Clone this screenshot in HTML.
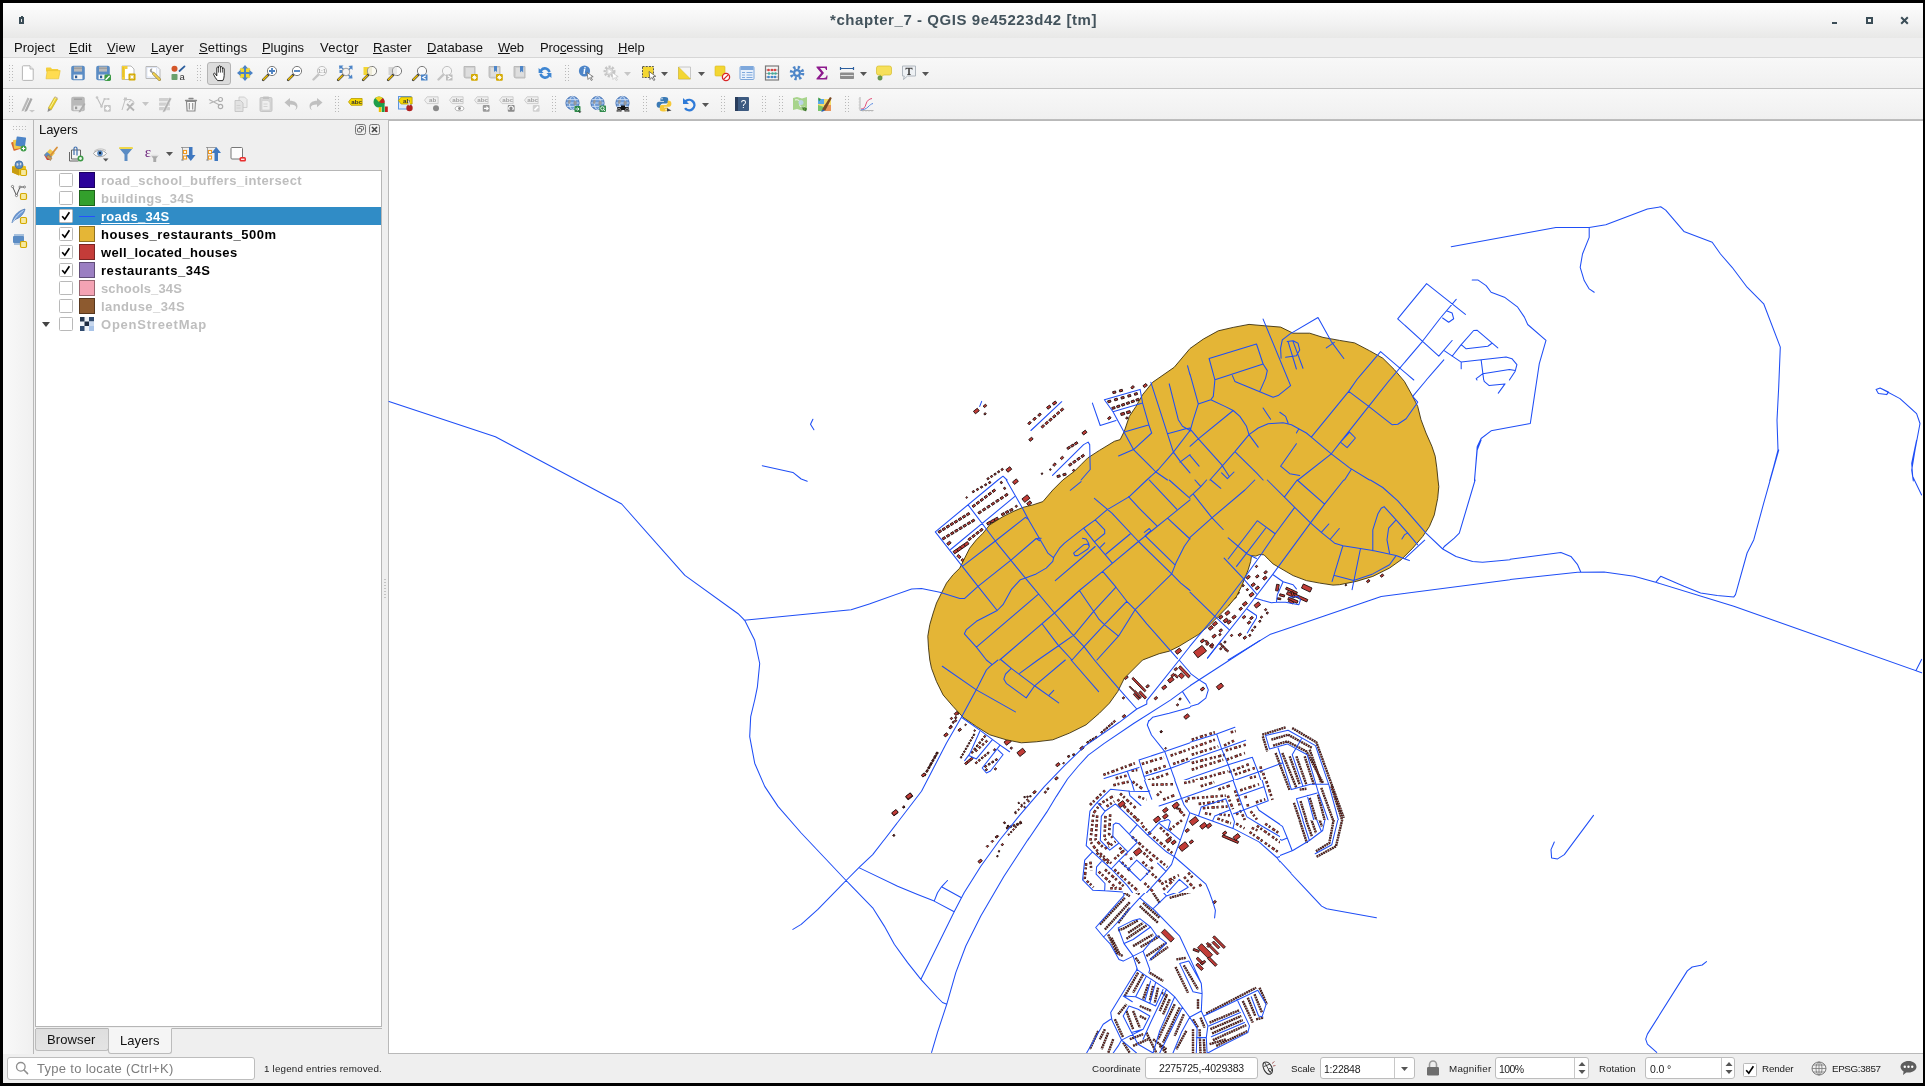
<!DOCTYPE html>
<html><head><meta charset="utf-8"><title>QGIS</title>
<style>
html,body{margin:0;padding:0}
body{width:1925px;height:1086px;background:#000;position:relative;overflow:hidden;font-family:"Liberation Sans",sans-serif}
.a{position:absolute}
.t{position:absolute;white-space:nowrap;will-change:transform}
u{text-decoration:underline;text-underline-offset:1px}
svg{position:absolute;overflow:visible;will-change:transform}
.hd{position:absolute;width:5px;height:19px;background-image:radial-gradient(circle,#b9b9b9 0.7px,transparent 0.9px);background-size:3px 3px}
</style></head><body>

<div class="a" style="left:3px;top:3px;width:1920px;height:1080px;background:#efefef"></div>
<div class="a" style="left:3px;top:3px;width:1920px;height:35px;background:linear-gradient(#fdfdfd,#f3f3f3 55%,#e8e8e7)"></div>
<span class="t" style="left:830.00px;top:11.32px;font-size:15px;line-height:17.235px;letter-spacing:0.562px;color:#43535c;font-weight:bold;">*chapter_7 - QGIS 9e45223d42 [tm]</span>
<div class="a" style="left:19px;top:17px;width:5px;height:7px;background:#3b4d57"></div><div class="a" style="left:21px;top:19px;width:1px;height:3px;background:#e8e8e8"></div><div class="a" style="left:21px;top:16px;width:2px;height:1px;background:#3b4d57"></div>
<div class="a" style="left:1832px;top:22px;width:5px;height:2px;background:#3b4d57"></div>
<div class="a" style="left:1866px;top:17px;width:3px;height:3px;border:2px solid #3b4d57"></div>
<svg style="left:1900px;top:16px" width="9" height="9" viewBox="0 0 9 9"><path d="M1.2 1.2L7.8 7.8M7.8 1.2L1.2 7.8" stroke="#3b4d57" stroke-width="2"/></svg>
<span class="t" style="left:13.70px;top:40.94px;font-size:13px;line-height:14.937px;letter-spacing:0.049px;color:#111;">Pro<u>j</u>ect</span>
<span class="t" style="left:69.40px;top:40.94px;font-size:13px;line-height:14.937px;letter-spacing:0.100px;color:#111;"><u>E</u>dit</span>
<span class="t" style="left:107.10px;top:40.94px;font-size:13px;line-height:14.937px;letter-spacing:0.090px;color:#111;"><u>V</u>iew</span>
<span class="t" style="left:150.50px;top:40.94px;font-size:13px;line-height:14.937px;letter-spacing:0.076px;color:#111;"><u>L</u>ayer</span>
<span class="t" style="left:198.50px;top:40.94px;font-size:13px;line-height:14.937px;letter-spacing:0.179px;color:#111;"><u>S</u>ettings</span>
<span class="t" style="left:262.30px;top:40.94px;font-size:13px;line-height:14.937px;letter-spacing:-0.091px;color:#111;"><u>P</u>lugins</span>
<span class="t" style="left:319.60px;top:40.94px;font-size:13px;line-height:14.937px;letter-spacing:0.324px;color:#111;">Vect<u>o</u>r</span>
<span class="t" style="left:373.30px;top:40.94px;font-size:13px;line-height:14.937px;letter-spacing:0.035px;color:#111;"><u>R</u>aster</span>
<span class="t" style="left:426.80px;top:40.94px;font-size:13px;line-height:14.937px;letter-spacing:0.056px;color:#111;"><u>D</u>atabase</span>
<span class="t" style="left:498.20px;top:40.94px;font-size:13px;line-height:14.937px;letter-spacing:-0.232px;color:#111;"><u>W</u>eb</span>
<span class="t" style="left:539.80px;top:40.94px;font-size:13px;line-height:14.937px;letter-spacing:-0.111px;color:#111;">Pro<u>c</u>essing</span>
<span class="t" style="left:618.30px;top:40.94px;font-size:13px;line-height:14.937px;letter-spacing:-0.009px;color:#111;"><u>H</u>elp</span>
<div class="a" style="left:3px;top:57px;width:1920px;height:1px;background:#d6d6d6"></div>
<div class="a" style="left:3px;top:58px;width:1920px;height:30px;background:linear-gradient(#f8f8f8,#f0f0f0)"></div>
<div class="a" style="left:3px;top:88px;width:1920px;height:1px;background:#c2c2c2"></div>
<div class="a" style="left:3px;top:89px;width:1920px;height:30px;background:linear-gradient(#f8f8f8,#f0f0f0)"></div>
<div class="a" style="left:3px;top:119px;width:1920px;height:1px;background:#bdbdbd"></div>
<div class="a" style="left:207px;top:62px;width:22px;height:21px;border:1px solid #b4b4b4;border-radius:3px;background:#dcdcdc"></div>
<svg style="left:19.8px;top:65px" width="16" height="16" viewBox="0 0 16 16"><path d="M3.200 0.800h6.800l3.200 3.200v10.600a.8.800 0 0 1-.8.800h-9.200a.8.800 0 0 1-.8-.8v-13a.8.800 0 0 1 .8-.8z" fill="#fff" stroke="#b4b4b4" stroke-width="1"/><path d="M10 .8v3.200h3.200" fill="#e9e9e9" stroke="#b4b4b4" stroke-width=".9"/></svg>
<svg style="left:44.8px;top:65px" width="16" height="16" viewBox="0 0 16 16"><path d="M1 3.200a.8.800 0 0 1 .8-.8h4l1.200 1.600h5.600a.8.800 0 0 1 .8.800v1.600h-12.400z" fill="#f4cf3c"/><path d="M2.200 5.600h13l-1.600 8.200h-12.600z" fill="#ffdc50" stroke="#e3bd2e" stroke-width=".6"/></svg>
<svg style="left:69.8px;top:65px" width="16" height="16" viewBox="0 0 16 16"><rect x="1.2" y="0.8" width="13.6" height="14.4" rx="2" fill="#5b8cc4"/><rect x="4" y="1.6" width="8" height="5" fill="#b9b9b9"/><rect x="4" y="2.6" width="8" height="1.2" fill="#9a9a9a"/><rect x="3.6" y="9.6" width="8.8" height="4.6" fill="#f4f4f4"/><rect x="5" y="10.6" width="2.2" height="2.6" fill="#2d5a94"/></svg>
<svg style="left:94.8px;top:65px" width="16" height="16" viewBox="0 0 16 16"><rect x="1.2" y="0.8" width="13.6" height="14.4" rx="2" fill="#5b8cc4"/><rect x="4" y="1.6" width="8" height="5" fill="#b9b9b9"/><rect x="4" y="2.6" width="8" height="1.2" fill="#9a9a9a"/><rect x="3.6" y="9.6" width="8.8" height="4.6" fill="#f4f4f4"/><rect x="5" y="10.6" width="2.2" height="2.6" fill="#2d5a94"/><rect x="9.400" y="9.400" width="6.600" height="6.600" rx="1.400" fill="#3c9a45"/><path d="M11 14.400l3.200-3.200" stroke="#fff" stroke-width="1.400" stroke-linecap="round"/></svg>
<svg style="left:119.8px;top:65px" width="16" height="16" viewBox="0 0 16 16"><path d="M2 1h9l3 3v10.500h-12z" fill="#fff" stroke="#b8b8b8"/><path d="M2 1h5.500v3h-2.500v10.500h-3z" fill="#f3cf3a"/><path d="M2.500 3h1.200M2.500 5h1.200M2.500 7h1.200M2.500 9h1.200M2.500 11h1.200" stroke="#c39c00" stroke-width=".7"/><rect x="8.500" y="8.500" width="7" height="7" rx="1" fill="#d4a900"/><path d="M12 9.800v4.400M9.800 12h4.400M10.500 10.500l3 3M13.500 10.500l-3 3" stroke="#fff" stroke-width="1"/></svg>
<svg style="left:144.8px;top:65px" width="16" height="16" viewBox="0 0 16 16"><path d="M1 1.500h11l3 3v9h-14z" fill="#f4f7ff" stroke="#b8b8b8"/><path d="M2 2.500h9.500v9.500h-9.500z" fill="#fff" stroke="#cfd9ee" stroke-width=".6"/><path d="M8.500 8.500l6 6" stroke="#8a7a3a" stroke-width="3" stroke-linecap="round"/><path d="M8.500 8.500l6 6" stroke="#f0cf50" stroke-width="1.800" stroke-linecap="round"/><path d="M5.200 4.200a2.200 2.200 0 1 0 3.600 2.600l-1.600-.4-.6-1.400 1-1.200a2.200 2.200 0 0 0-2.400.4z" fill="#9a9a9a"/></svg>
<svg style="left:169.8px;top:65px" width="16" height="16" viewBox="0 0 16 16"><circle cx="4.500" cy="3.800" r="3" fill="#d4572a"/><rect x="1.500" y="9" width="6" height="6" rx=".8" fill="#6aa06c"/><path d="M9.500 6l5-4.600" stroke="#2d5f9e" stroke-width="1.800" stroke-linecap="round"/><text x="12.200" y="15" font-family="Liberation Sans, sans-serif" font-size="9.500" text-anchor="middle" fill="#333">a</text></svg>
<svg style="left:211.8px;top:65px" width="16" height="16" viewBox="0 0 16 16"><path d="M5.600 15.600c-1.500-1.700-3.200-4.200-4-6.200-.4-1.100 1-1.700 1.700-.7l1.500 2.200v-7.900c0-1.300 1.800-1.300 1.800 0v-1.300c0-1.300 1.900-1.300 1.900 0v.9c0-1.300 1.900-1.300 1.900 0v1.300c0-1.200 1.800-1.200 1.800 0v6.500c0 2.200-.6 3.500-1.300 5.200z" fill="#fff" stroke="#1a1a1a" stroke-width=".95" stroke-linejoin="round"/><path d="M6.600 3v4.600M8.500 2.600v5M10.400 3.900v3.700" stroke="#1a1a1a" stroke-width=".75"/></svg>
<svg style="left:236.8px;top:65px" width="16" height="16" viewBox="0 0 16 16"><rect x="3.200" y="3.200" width="9.600" height="9.600" rx="1" fill="#f2d830" stroke="#d9bd1e" stroke-width=".5"/><path d="M8 0l3 3.600h-6zM8 16l3-3.600h-6zM0 8l3.600-3v6zM16 8l-3.600-3v6z" fill="#4a82c6"/><path d="M8 3v10M3 8h10" stroke="#4a82c6" stroke-width="2"/></svg>
<svg style="left:261.8px;top:65px" width="16" height="16" viewBox="0 0 16 16"><path d="M1.2 14.8L6.2 9.8" stroke="#3a3a3a" stroke-width="2.6" stroke-linecap="round"/><path d="M1.5 14.5L5.2 10.8" stroke="#f0c000" stroke-width="1.5" stroke-linecap="round"/><circle cx="10" cy="6" r="4.6" fill="#fff" stroke="#7a7a7a" stroke-width="1"/><path d="M7 6h6M10 3v6" stroke="#4a7fc0" stroke-width="1.800"/></svg>
<svg style="left:286.8px;top:65px" width="16" height="16" viewBox="0 0 16 16"><path d="M1.2 14.8L6.2 9.8" stroke="#3a3a3a" stroke-width="2.6" stroke-linecap="round"/><path d="M1.5 14.5L5.2 10.8" stroke="#f0c000" stroke-width="1.5" stroke-linecap="round"/><circle cx="10" cy="6" r="4.6" fill="#fff" stroke="#7a7a7a" stroke-width="1"/><path d="M7 6h6" stroke="#4a7fc0" stroke-width="1.800"/></svg>
<svg style="left:311.8px;top:65px" width="16" height="16" viewBox="0 0 16 16"><path d="M1.5 14.5L6.2 9.8" stroke="#c4c4c4" stroke-width="2.4" stroke-linecap="round"/><circle cx="10" cy="6" r="4.6" fill="#f6f6f6" stroke="#c0c0c0" stroke-width="1"/><text x="10" y="8" font-family="Liberation Sans, sans-serif" font-size="5.500" font-weight="bold" text-anchor="middle" fill="#a8a8a8">1:1</text></svg>
<svg style="left:336.8px;top:65px" width="16" height="16" viewBox="0 0 16 16"><path d="M2 .5h4.500l-1.500 1.500 2 2-1 1-2-2-1.500 1.500zM15.500.5v4.500l-1.500-1.500-2 2-1-1 2-2-1.500-1.500zM15.500 13.500h-4.500l1.500-1.500-2-2 1-1 2 2 1.500-1.500zM2.500 5h3v3h-3z" fill="#4d85c8"/><path d="M1.2 14.8L6.2 9.8" stroke="#3a3a3a" stroke-width="2.6" stroke-linecap="round"/><path d="M1.5 14.5L5.2 10.8" stroke="#f0c000" stroke-width="1.5" stroke-linecap="round"/><circle cx="9" cy="7" r="3.800" fill="#f2f2f2" fill-opacity=".85" stroke="#8a8a8a" stroke-width=".8"/></svg>
<svg style="left:361.8px;top:65px" width="16" height="16" viewBox="0 0 16 16"><rect x="1.500" y="2" width="7" height="8" fill="#f3d632"/><path d="M1.2 14.8L6.2 9.8" stroke="#3a3a3a" stroke-width="2.6" stroke-linecap="round"/><path d="M1.5 14.5L5.2 10.8" stroke="#f0c000" stroke-width="1.5" stroke-linecap="round"/><circle cx="10" cy="6" r="4.6" fill="#fbfaf2" stroke="#7a7a7a" stroke-width="1"/><path d="M10 1.500a4.500 4.500 0 0 0 0 9z" fill="#e8e4cc" opacity=".7"/></svg>
<svg style="left:386.8px;top:65px" width="16" height="16" viewBox="0 0 16 16"><rect x="1.500" y="2" width="7" height="8" fill="#d4d4d4"/><path d="M1.2 14.8L6.2 9.8" stroke="#3a3a3a" stroke-width="2.6" stroke-linecap="round"/><path d="M1.5 14.5L5.2 10.8" stroke="#f0c000" stroke-width="1.5" stroke-linecap="round"/><circle cx="10" cy="6" r="4.6" fill="#fafafa" stroke="#7a7a7a" stroke-width="1"/><path d="M10 1.500a4.500 4.500 0 0 0 0 9z" fill="#e2e2e2" opacity=".7"/></svg>
<svg style="left:411.8px;top:65px" width="16" height="16" viewBox="0 0 16 16"><path d="M1.2 14.8L6.2 9.8" stroke="#3a3a3a" stroke-width="2.6" stroke-linecap="round"/><path d="M1.5 14.5L5.2 10.8" stroke="#f0c000" stroke-width="1.5" stroke-linecap="round"/><circle cx="10" cy="6" r="4.6" fill="#fafafa" stroke="#7a7a7a" stroke-width="1"/><rect x="9" y="9.500" width="6.500" height="6" fill="#4d85c8"/><path d="M13.800 10.800l-3 1.700 3 1.700" stroke="#fff" stroke-width="1.200" fill="none"/></svg>
<svg style="left:436.8px;top:65px" width="16" height="16" viewBox="0 0 16 16"><path d="M1.5 14.5L6.2 9.8" stroke="#c4c4c4" stroke-width="2.4" stroke-linecap="round"/><circle cx="10" cy="6" r="4.6" fill="#f6f6f6" stroke="#c0c0c0" stroke-width="1"/><rect x="9" y="9.500" width="6.500" height="6" fill="#bdbdbd"/><path d="M10.800 10.800l3 1.700-3 1.700" stroke="#fff" stroke-width="1.200" fill="none"/></svg>
<svg style="left:461.8px;top:65px" width="16" height="16" viewBox="0 0 16 16"><path d="M2 1.500h11v11.500h-9a2 2 0 0 1-2-2z" fill="#cfcfcf" stroke="#b0b0b0" stroke-width=".8"/><path d="M4 3h8v8.500h-8z" fill="#dedede"/><rect x="9" y="9" width="6.800" height="6.800" rx="1" fill="#d4a900"/><path d="M12.400 10.200v4.400M10.200 12.400h4.400M10.900 10.900l3 3M13.900 10.900l-3 3" stroke="#fff" stroke-width="1"/></svg>
<svg style="left:486.8px;top:65px" width="16" height="16" viewBox="0 0 16 16"><path d="M2 1.500h11v11.500h-9a2 2 0 0 1-2-2z" fill="#cfcfcf" stroke="#b0b0b0" stroke-width=".8"/><path d="M4 3h8v8.500h-8z" fill="#dedede"/><path d="M7 1v6l1.500-1.300 1.500 1.300v-6z" fill="#4d85c8"/><rect x="9" y="9" width="6.800" height="6.800" rx="1" fill="#d4a900"/><path d="M12.400 10.200v4.400M10.200 12.400h4.400M10.900 10.900l3 3M13.900 10.900l-3 3" stroke="#fff" stroke-width="1"/></svg>
<svg style="left:511.8px;top:65px" width="16" height="16" viewBox="0 0 16 16"><path d="M2 1.500h11v11.500h-9a2 2 0 0 1-2-2z" fill="#cfcfcf" stroke="#b0b0b0" stroke-width=".8"/><path d="M4 3h8v8.500h-8z" fill="#dedede"/><path d="M8 1v6.500l1.600-1.400 1.600 1.400v-6.500z" fill="#4d85c8"/></svg>
<svg style="left:536.8px;top:65px" width="16" height="16" viewBox="0 0 16 16"><path d="M13.600 7a5.800 5.800 0 0 0-10.400-2.600l-1.600-1.400v5h5l-1.700-1.800a3.500 3.500 0 0 1 6.300 1.400z" fill="#3f86d2"/><path d="M2.400 9a5.800 5.800 0 0 0 10.400 2.600l1.600 1.400v-5h-5l1.700 1.800a3.500 3.500 0 0 1-6.300-1.400z" fill="#3f86d2"/></svg>
<svg style="left:577.8px;top:65px" width="16" height="16" viewBox="0 0 16 16"><circle cx="6.500" cy="6" r="5.600" fill="#4d85c8"/><text x="6.500" y="9.400" font-family="Liberation Serif, serif" font-size="10" font-weight="bold" font-style="italic" text-anchor="middle" fill="#fff">i</text><path d="M9 7.500l1 7 1.700-1.800 1.600 2.800 1.100-.6-1.600-2.800 2.400-.4z" fill="#fff" stroke="#555" stroke-width=".7" stroke-linejoin="round"/></svg>
<svg style="left:602.8px;top:65px" width="16" height="16" viewBox="0 0 16 16"><circle cx="6.500" cy="6.500" r="4.800" fill="none" stroke="#c6c6c6" stroke-width="2.400" stroke-dasharray="2.200 1.300"/><circle cx="6.500" cy="6.500" r="3.600" fill="#dcdcdc" stroke="#c0c0c0" stroke-width=".8"/><path d="M5.400 4.500v4l3-2z" fill="#fff"/><path d="M9 7.500l1 7 1.700-1.800 1.600 2.800 1.100-.6-1.600-2.800 2.400-.4z" fill="#fff" stroke="#c2c2c2" stroke-width=".7"/></svg>
<svg style="left:640.8px;top:65px" width="16" height="16" viewBox="0 0 16 16"><rect x="1.500" y="1.500" width="11" height="11" fill="#f3d632" stroke="#555" stroke-width="1" stroke-dasharray="2 1.200"/><path d="M8 6.500l1 8 1.900-2 1.800 3 1.200-.7-1.800-3 2.700-.5z" fill="#fff" stroke="#444" stroke-width=".7" stroke-linejoin="round"/></svg>
<svg style="left:676.8px;top:65px" width="16" height="16" viewBox="0 0 16 16"><path d="M1.500 2h12v12h-12z" fill="#f4f4f4" stroke="#bdbdbd" stroke-width=".8"/><path d="M1.500 2l12 12h-12z" fill="#f3d632" stroke="#d0b420" stroke-width=".5"/></svg>
<svg style="left:713.8px;top:65px" width="16" height="16" viewBox="0 0 16 16"><rect x="1" y="1" width="10" height="10" rx="1" fill="#f3d632" stroke="#d6ba24" stroke-width=".6"/><circle cx="12" cy="12" r="3.600" fill="#fff" stroke="#d82424" stroke-width="1.300"/><path d="M9.600 14.400l4.800-4.800" stroke="#d82424" stroke-width="1.300"/></svg>
<svg style="left:738.8px;top:65px" width="16" height="16" viewBox="0 0 16 16"><rect x="1" y="1.500" width="14" height="13" rx="1" fill="#e8f0fb" stroke="#7ea8dc" stroke-width="1"/><rect x="1.500" y="2" width="13" height="3" fill="#7ea8dc"/><path d="M3 7.500h3M7.500 7.500h6M3 10h3M7.500 10h6M3 12.500h3M7.500 12.500h6" stroke="#7ea8dc" stroke-width="1.100"/></svg>
<svg style="left:763.8px;top:65px" width="16" height="16" viewBox="0 0 16 16"><rect x="1.500" y="1" width="13" height="14" fill="#f4f4f4" stroke="#7a7a7a" stroke-width="1.200"/><path d="M2 5h12M2 8.500h12M2 12h12" stroke="#8a8a8a" stroke-width=".7"/><circle cx="4.500" cy="5" r="1.300" fill="#d44"/><circle cx="8" cy="5" r="1.300" fill="#d44"/><circle cx="11" cy="5" r="1.300" fill="#d44"/><circle cx="5" cy="8.500" r="1.300" fill="#4a9"/><circle cx="8.500" cy="8.500" r="1.300" fill="#4a9"/><circle cx="11.500" cy="8.500" r="1.300" fill="#4a9"/><circle cx="4.500" cy="12" r="1.300" fill="#48c"/><circle cx="8" cy="12" r="1.300" fill="#48c"/><circle cx="11" cy="12" r="1.300" fill="#48c"/></svg>
<svg style="left:788.8px;top:65px" width="16" height="16" viewBox="0 0 16 16"><circle cx="8" cy="8" r="5.600" fill="none" stroke="#4d85c8" stroke-width="3.400" stroke-dasharray="2.200 2.200"/><circle cx="8" cy="8" r="4" fill="#4d85c8"/><circle cx="8" cy="8" r="1.800" fill="#f4f4f4"/></svg>
<svg style="left:813.8px;top:65px" width="16" height="16" viewBox="0 0 16 16"><path d="M2.500 1.500h10.500v3.500h-1c-.2-1.500-.8-2-2.500-2h-3.500l4 5-4.200 5h4c1.800 0 2.400-.7 2.800-2.500h1l-.5 4h-10.600v-1l4.600-5.500-4.600-5.500z" fill="#8e1a8e"/></svg>
<svg style="left:838.8px;top:65px" width="16" height="16" viewBox="0 0 16 16"><path d="M1 3.500h14M1.500 2v3M14.500 2v3" stroke="#2d5f9e" stroke-width="1.200"/><rect x="1" y="7.500" width="14" height="6.500" rx=".8" fill="#8c8c8c"/><path d="M1.500 10.500h13" stroke="#e0e0e0" stroke-width="1"/></svg>
<svg style="left:875.8px;top:65px" width="16" height="16" viewBox="0 0 16 16"><path d="M2.500 1h11a2 2 0 0 1 2 2v5a2 2 0 0 1-2 2h-6l-3.500 3.500.5-3.500h-2a2 2 0 0 1-2-2v-5a2 2 0 0 1 2-2z" fill="#f6e05a" stroke="#d6bc2e" stroke-width=".7"/><circle cx="4" cy="13" r="2.200" fill="#6a9a50" stroke="#4a7a35" stroke-width=".5"/></svg>
<svg style="left:900.8px;top:65px" width="16" height="16" viewBox="0 0 16 16"><path d="M1.500 1h13v10h-8l-4 3.500.8-3.500h-1.800z" fill="#eef1f4" stroke="#a8b0b8" stroke-width=".9"/><path d="M4.500 2.800h7v2h-.6c-.1-.8-.4-1-1.200-1h-.9v4.800c0 .5.200.7 1 .7v.6h-3.600v-.6c.8 0 1-.2 1-.7v-4.800h-.9c-.8 0-1.100.2-1.200 1h-.6z" fill="#444"/></svg>
<div class="hd" style="left:8px;top:64px"></div>
<div class="hd" style="left:196px;top:64px"></div>
<div class="hd" style="left:564px;top:64px"></div>
<svg style="left:623.5px;top:72px" width="7" height="4" viewBox="0 0 7 4"><path d="M0 0h7L3.500 4z" fill="#c6c6c6"/></svg>
<svg style="left:660.5px;top:72px" width="7" height="4" viewBox="0 0 7 4"><path d="M0 0h7L3.5 4z" fill="#555"/></svg>
<svg style="left:697.5px;top:72px" width="7" height="4" viewBox="0 0 7 4"><path d="M0 0h7L3.5 4z" fill="#555"/></svg>
<svg style="left:859.5px;top:72px" width="7" height="4" viewBox="0 0 7 4"><path d="M0 0h7L3.5 4z" fill="#555"/></svg>
<svg style="left:921.5px;top:72px" width="7" height="4" viewBox="0 0 7 4"><path d="M0 0h7L3.5 4z" fill="#555"/></svg>
<svg style="left:19.8px;top:96px" width="16" height="16" viewBox="0 0 16 16"><path d="M2 13.500l5.500-12 2 1-5.500 12-2.500 1z" fill="#b8b8b8"/><path d="M5 14l5.500-12 2 1-5.500 12-2.500 1z" fill="#a9a9a9"/><path d="M9 14h6l-3 2.600z" fill="#c9c9c9"/></svg>
<svg style="left:44.8px;top:96px" width="16" height="16" viewBox="0 0 16 16"><path d="M3.200 12.200l6.300-11 3 1.700-6.300 11z" fill="#e8cf2c" stroke="#b89c10" stroke-width=".5"/><path d="M5 11.800l5.600-9.800" stroke="#fff6a8" stroke-width=".9"/><path d="M3.200 12.200l3 1.700-3.700 2z" fill="#8d8d8d"/><path d="M9.500 1.200l.6-1 3 1.700-.6 1z" fill="#c9b9a0"/></svg>
<svg style="left:69.8px;top:96px" width="16" height="16" viewBox="0 0 16 16"><rect x="1.2" y="0.8" width="13.6" height="14.4" rx="2" fill="#b9b9b9"/><rect x="4" y="1.6" width="8" height="5" fill="#b9b9b9"/><rect x="4" y="2.6" width="8" height="1.2" fill="#9a9a9a"/><rect x="3.6" y="9.6" width="8.8" height="4.6" fill="#e6e6e6"/><rect x="5" y="10.6" width="2.2" height="2.6" fill="#9a9a9a"/><path d="M9 15l5-8 1.500 1-5 8-2 .6z" fill="#adadad"/></svg>
<svg style="left:94.8px;top:96px" width="16" height="16" viewBox="0 0 16 16"><path d="M2 1.500l4.500 9 3-7.500h4" fill="none" stroke="#bdbdbd" stroke-width="1.100"/><circle cx="2" cy="1.500" r="1.300" fill="#c6c6c6"/><circle cx="6.500" cy="10.500" r="1.300" fill="#c6c6c6"/><circle cx="9.500" cy="3" r="1.100" fill="#c6c6c6"/><circle cx="13.500" cy="3" r="1.100" fill="#c6c6c6"/><rect x="9" y="9" width="6.800" height="6.800" rx="1" fill="#c6c6c6"/><path d="M12.400 10.200v4.400M10.200 12.400h4.400M10.900 10.900l3 3M13.900 10.900l-3 3" stroke="#fff" stroke-width="1"/></svg>
<svg style="left:119.8px;top:96px" width="16" height="16" viewBox="0 0 16 16"><path d="M2 14l3.500-11.500M3.500 3.500h8" stroke="#c0c0c0" stroke-width="1"/><rect x="4" y="1.500" width="3" height="3" fill="#c6c6c6"/><path d="M7 8l7 6.500M13 7l-6 7.500" stroke="#b4b4b4" stroke-width="1.800"/><path d="M9 6.500a2.500 2.500 0 1 1 3 3" stroke="#c0c0c0" fill="none"/></svg>
<svg style="left:157.8px;top:96px" width="16" height="16" viewBox="0 0 16 16"><rect x="1" y="2" width="11" height="3.300" rx=".6" fill="#d0d0d0"/><rect x="1" y="6.500" width="11" height="3.300" rx=".6" fill="#d0d0d0"/><rect x="1" y="11" width="11" height="3.300" rx=".6" fill="#d0d0d0"/><path d="M5 14.500l6.500-13 2.200 1.100-6.500 13-2.600.9z" fill="#b2b2b2" stroke="#f4f4f4" stroke-width=".4"/></svg>
<svg style="left:182.8px;top:96px" width="16" height="16" viewBox="0 0 16 16"><path d="M2.500 4.500h11M6 2.500h4" stroke="#8a8a8a" stroke-width="1.300" stroke-linecap="round"/><path d="M3.500 5.500h9l-.6 9.500h-7.800z" fill="#fafafa" stroke="#8a8a8a" stroke-width="1.200"/><path d="M6.300 7v6.500M9.700 7v6.500" stroke="#8a8a8a" stroke-width="1.100"/></svg>
<svg style="left:207.8px;top:96px" width="16" height="16" viewBox="0 0 16 16"><path d="M1 3.500l10.500 5.500M1.500 7.500l9.500-4" stroke="#b4b4b4" stroke-width="1.100"/><circle cx="12.500" cy="3.500" r="2" fill="none" stroke="#adadad" stroke-width="1.200"/><circle cx="12.500" cy="10.500" r="2.200" fill="none" stroke="#adadad" stroke-width="1.200"/></svg>
<svg style="left:232.8px;top:96px" width="16" height="16" viewBox="0 0 16 16"><path d="M6 1h5.500l2.500 2.500v8h-8z" fill="#ececec" stroke="#cdcdcd" stroke-width=".9"/><path d="M2 4.500h5.500l2.500 2.500v8.500h-8z" fill="#e2e2e2" stroke="#c4c4c4" stroke-width=".9"/><path d="M3.500 9.500h4M3.500 12h4" stroke="#cfcfcf" stroke-width=".9"/></svg>
<svg style="left:257.8px;top:96px" width="16" height="16" viewBox="0 0 16 16"><rect x="2" y="1.500" width="12" height="14" rx="1.200" fill="#d6d6d6" stroke="#c2c2c2" stroke-width=".9"/><rect x="5" y=".5" width="6" height="2.500" rx=".6" fill="#c2c2c2"/><path d="M4 4.500h6l2 2v7.500h-8z" fill="#efefef" stroke="#cacaca" stroke-width=".6"/><path d="M5.500 8h4M5.500 10.500h4" stroke="#cfcfcf" stroke-width=".9"/></svg>
<svg style="left:282.8px;top:96px" width="16" height="16" viewBox="0 0 16 16"><path d="M1.500 6.500l5.500-4.500v2.800c4.500 0 7.500 2.200 7.500 5.400 0 1.800-1 3.200-2.600 4 .9-.9 1.300-1.800 1.300-2.700 0-1.900-2.400-2.900-6.200-2.900v2.700z" fill="#c0c0c0"/></svg>
<svg style="left:307.8px;top:96px" width="16" height="16" viewBox="0 0 16 16"><path d="M14.500 6.500l-5.500-4.500v2.800c-4.500 0-7.500 2.200-7.500 5.400 0 1.800 1 3.200 2.600 4-.9-.9-1.300-1.800-1.300-2.700 0-1.900 2.400-2.900 6.200-2.900v2.700z" fill="#c0c0c0"/></svg>
<svg style="left:347.8px;top:96px" width="16" height="16" viewBox="0 0 16 16"><path d="M0.5 5.9 l2.6 -3.4 h11 v6.8 h-11 z" fill="#f5d800" stroke="#b89a00" stroke-width="0.8"/><text x="8.6" y="8.1" font-family="Liberation Sans, sans-serif" font-size="6.2" font-weight="bold" text-anchor="middle" fill="#333">abc</text></svg>
<svg style="left:372.8px;top:96px" width="16" height="16" viewBox="0 0 16 16"><circle cx="6" cy="6" r="5.500" fill="#1e9e4a"/><path d="M6 6l-3.900-3.900a5.500 5.500 0 0 1 7.800 0z" fill="#f0d020"/><path d="M6 6l3.900-3.900a5.500 5.500 0 0 1 1 6.400z" fill="#c8201e"/><rect x="5.800" y="11" width="2.600" height="5" fill="#f0c000"/><rect x="8.800" y="7" width="2.800" height="9" fill="#1e9e4a"/><rect x="12" y="10.500" width="2.800" height="5.500" fill="#c8201e"/></svg>
<svg style="left:397.8px;top:96px" width="16" height="16" viewBox="0 0 16 16"><rect x=".5" y=".5" width="12.500" height="12.500" fill="#dbe8fa" stroke="#5b95e0" stroke-width="1"/><path d="M0.5 4.6 l2.6 -3.4 h11 v6.8 h-11 z" fill="#f5d800" stroke="#b89a00" stroke-width="0.8"/><text x="8.6" y="6.8" font-family="Liberation Sans, sans-serif" font-size="6.2" font-weight="bold" text-anchor="middle" fill="#333">ab</text><circle cx="11.500" cy="12" r="3.200" fill="#b02222"/><path d="M10.500 4.500l1 5" stroke="#ddd" stroke-width="1.400"/></svg>
<svg style="left:423.8px;top:96px" width="16" height="16" viewBox="0 0 16 16"><path d="M0.5 4.2 l2.6 -3.4 h11 v6.8 h-11 z" fill="#f0f0f0" stroke="#c4c4c4" stroke-width="0.8"/><text x="8.6" y="6.4" font-family="Liberation Sans, sans-serif" font-size="6.2" font-weight="bold" text-anchor="middle" fill="#a2a2a2">ab</text><circle cx="12" cy="12.200" r="3" fill="#8a8a8a"/></svg>
<svg style="left:448.8px;top:96px" width="16" height="16" viewBox="0 0 16 16"><path d="M0.5 4.2 l2.6 -3.4 h11 v6.8 h-11 z" fill="#f0f0f0" stroke="#c4c4c4" stroke-width="0.8"/><text x="8.6" y="6.4" font-family="Liberation Sans, sans-serif" font-size="6.2" font-weight="bold" text-anchor="middle" fill="#a2a2a2">abc</text><ellipse cx="10.500" cy="12.500" rx="4.300" ry="2.300" fill="#fff" stroke="#9a9a9a" stroke-width=".8"/><circle cx="10.500" cy="12.500" r="1.400" fill="#8a8a8a"/></svg>
<svg style="left:473.8px;top:96px" width="16" height="16" viewBox="0 0 16 16"><path d="M0.5 4.2 l2.6 -3.4 h11 v6.8 h-11 z" fill="#f0f0f0" stroke="#c4c4c4" stroke-width="0.8"/><text x="8.6" y="6.4" font-family="Liberation Sans, sans-serif" font-size="6.2" font-weight="bold" text-anchor="middle" fill="#a2a2a2">abc</text><rect x="8.800" y="9" width="6.800" height="6.800" rx="1" fill="#9a9a9a"/><path d="M10 12.400h4M12.400 10.600l1.800 1.800-1.800 1.800" stroke="#fff" stroke-width="1.200" fill="none"/></svg>
<svg style="left:498.8px;top:96px" width="16" height="16" viewBox="0 0 16 16"><path d="M0.5 4.2 l2.6 -3.4 h11 v6.8 h-11 z" fill="#f0f0f0" stroke="#c4c4c4" stroke-width="0.8"/><text x="8.6" y="6.4" font-family="Liberation Sans, sans-serif" font-size="6.2" font-weight="bold" text-anchor="middle" fill="#a2a2a2">abc</text><rect x="8.800" y="9" width="6.800" height="6.800" rx="1" fill="#8a8a8a"/><path d="M10.400 13.800a2.200 2.200 0 1 1 3.200 0" stroke="#fff" stroke-width="1.100" fill="none"/></svg>
<svg style="left:523.8px;top:96px" width="16" height="16" viewBox="0 0 16 16"><path d="M0.5 4.2 l2.6 -3.4 h11 v6.8 h-11 z" fill="#f0f0f0" stroke="#c4c4c4" stroke-width="0.8"/><text x="8.6" y="6.4" font-family="Liberation Sans, sans-serif" font-size="6.2" font-weight="bold" text-anchor="middle" fill="#a2a2a2">abc</text><rect x="8.800" y="9" width="6.800" height="6.800" rx="1" fill="#d0d0d0"/><path d="M10.500 14.200l3.600-3.600" stroke="#fff" stroke-width="1.800"/></svg>
<svg style="left:564.8px;top:96px" width="16" height="16" viewBox="0 0 16 16"><circle cx="7.5" cy="7" r="6.6" fill="#6f9bd6" stroke="#2f5fa8" stroke-width="0.8"/><ellipse cx="7.5" cy="7" rx="3" ry="6.6" fill="none" stroke="#d8e6f7" stroke-width="0.9"/><path d="M1 7h13M2 3.6h11M2 10.4h11" stroke="#d8e6f7" stroke-width="0.8"/><path d="M3.4 4.5c1-.8 2-1 2.2 0s-.2 2.400-1 3.200-1.800-.2-1.600-1.600z M9 5c1.200-.6 2.600 0 2.800 1.200s-.6 3-1.600 3.200-1.600-1.200-1.800-2.200z" fill="#8f8f8f" opacity=".85"/><rect x="9.500" y="10" width="6" height="6" rx=".8" fill="#2f8a4a"/><path d="M10.500 13h3.500l-1.500-1.500M14 13l-1.500 1.500" stroke="#fff" stroke-width=".9" fill="none"/><path d="M13 15.500h3.500l-1.700 1.500z" fill="#333"/></svg>
<svg style="left:589.8px;top:96px" width="16" height="16" viewBox="0 0 16 16"><circle cx="7.5" cy="7" r="6.6" fill="#6f9bd6" stroke="#2f5fa8" stroke-width="0.8"/><ellipse cx="7.5" cy="7" rx="3" ry="6.6" fill="none" stroke="#d8e6f7" stroke-width="0.9"/><path d="M1 7h13M2 3.6h11M2 10.4h11" stroke="#d8e6f7" stroke-width="0.8"/><path d="M3.4 4.5c1-.8 2-1 2.2 0s-.2 2.400-1 3.200-1.800-.2-1.600-1.600z M9 5c1.200-.6 2.600 0 2.800 1.200s-.6 3-1.600 3.200-1.600-1.200-1.800-2.200z" fill="#8f8f8f" opacity=".85"/><rect x="9.500" y="9.500" width="6.500" height="6.500" rx=".8" fill="#2f8a4a"/><circle cx="12.400" cy="12.400" r="1.700" fill="none" stroke="#fff" stroke-width=".9"/><path d="M13.600 13.600l1.600 1.600" stroke="#fff" stroke-width=".9"/></svg>
<svg style="left:614.8px;top:96px" width="16" height="16" viewBox="0 0 16 16"><circle cx="7.5" cy="7" r="6.6" fill="#6f9bd6" stroke="#2f5fa8" stroke-width="0.8"/><ellipse cx="7.5" cy="7" rx="3" ry="6.6" fill="none" stroke="#d8e6f7" stroke-width="0.9"/><path d="M1 7h13M2 3.6h11M2 10.4h11" stroke="#d8e6f7" stroke-width="0.8"/><path d="M3.4 4.5c1-.8 2-1 2.2 0s-.2 2.400-1 3.200-1.800-.2-1.600-1.600z M9 5c1.200-.6 2.600 0 2.800 1.200s-.6 3-1.600 3.200-1.600-1.200-1.800-2.200z" fill="#8f8f8f" opacity=".85"/><path d="M2.500 11h3.500v-1.500h4v1.500h3.500l1 4.500h-5v-1.500h-3v1.500h-5z" fill="#111"/><circle cx="4" cy="13.700" r="1.500" fill="#333" stroke="#eee" stroke-width=".5"/><circle cx="12" cy="13.700" r="1.500" fill="#333" stroke="#eee" stroke-width=".5"/></svg>
<svg style="left:655.8px;top:96px" width="16" height="16" viewBox="0 0 16 16"><path d="M7.800 1c-2.400 0-3.400.8-3.400 2.200v1.800h3.600v.8h-5c-1.500 0-2.400 1.200-2.400 3s.9 3 2.400 3h1.400v-2c0-1.400 1-2.400 2.400-2.400h3.400c1.200 0 2-.9 2-2v-2.200c0-1.400-1.200-2.200-3.200-2.200z" fill="#3b7ab5"/><circle cx="6" cy="2.800" r=".7" fill="#fff"/><path d="M8.200 15.500c2.400 0 3.400-.8 3.400-2.200v-1.800h-3.600v-.8h5c1.500 0 2.400-1.200 2.400-3s-.9-3-2.400-3h-1.400v2c0 1.400-1 2.400-2.400 2.400h-3.400c-1.200 0-2 .9-2 2v2.200c0 1.400 1.200 2.200 3.200 2.200z" fill="#f6c93a"/><circle cx="10" cy="13.700" r=".7" fill="#fff"/><path d="M11 12l4.500 2.500-4.500 1z" fill="#444"/></svg>
<svg style="left:680.8px;top:96px" width="16" height="16" viewBox="0 0 16 16"><path d="M2 2v6h6l-2.200-2.200a4 4 0 1 1-.8 5.700l-2 1.300a6.400 6.400 0 1 0 1.100-8.700z" fill="#2f7bd8"/></svg>
<svg style="left:733.8px;top:96px" width="16" height="16" viewBox="0 0 16 16"><rect x="1" y="1" width="14" height="14" rx="1" fill="#3d5a80"/><rect x="1" y="1" width="3" height="14" fill="#293d5c"/><text x="9.500" y="12" font-family="Liberation Sans, sans-serif" font-size="10" text-anchor="middle" fill="#fff">?</text></svg>
<svg style="left:791.8px;top:96px" width="16" height="16" viewBox="0 0 16 16"><path d="M1 2l4-1 5 1.500 5-1.500v12l-5 1.500-5-1.500-4 1z" fill="#a8d48c"/><path d="M3 4c3-1 6 1 5 4s2 4 5 3" stroke="#f4f4f4" stroke-width="1" fill="none"/><circle cx="9" cy="6.500" r="2.500" fill="#bcd4f0" opacity=".9"/><path d="M9 11l5 4.500 1-3z" fill="#3a7a2a"/><circle cx="12.500" cy="13" r="1.500" fill="#5a9a3a" stroke="#2a5a1a" stroke-width=".5"/></svg>
<svg style="left:816.8px;top:96px" width="16" height="16" viewBox="0 0 16 16"><rect x="1" y="3" width="13" height="12" fill="#f4dc6a"/><path d="M1 3h6v5h-6z" fill="#58a8e8"/><path d="M7 9h7v6h-7z" fill="#e8945a"/><path d="M1 9l6 2v4h-6z" fill="#7ac46a"/><path d="M5 13.500l8-12.500 1.800 1-6.500 12.500z" fill="#7a4a24"/><path d="M5 13.500l3.200 1-3.800 1.500z" fill="#2a5fb0"/><path d="M1 1.500l3 1.500-2 2.500z" fill="#3a9a3a"/></svg>
<svg style="left:857.8px;top:96px" width="16" height="16" viewBox="0 0 16 16"><path d="M2 1v13.500h13.500" stroke="#b4b4b4" stroke-width="1" fill="none"/><path d="M3 13c3 0 4-1.500 5-5s3-5 6-5.500" stroke="#e0507a" stroke-width="1" fill="none"/><path d="M3 14c3-.5 5-1 7-3s3-3 5-3.500" stroke="#5a8ae0" stroke-width="1" fill="none"/><path d="M2 3h-1.500M2 6h-1.500M2 9h-1.500M2 12h-1.500M5 14.500v1.500M8 14.500v1.500M11 14.500v1.500M14 14.500v1.500" stroke="#c4c4c4" stroke-width=".7"/></svg>
<div class="hd" style="left:8px;top:95px"></div>
<div class="hd" style="left:334px;top:95px"></div>
<div class="hd" style="left:551px;top:95px"></div>
<div class="hd" style="left:642px;top:95px"></div>
<div class="hd" style="left:720px;top:95px"></div>
<div class="hd" style="left:761px;top:95px"></div>
<div class="hd" style="left:778px;top:95px"></div>
<div class="hd" style="left:844px;top:95px"></div>
<svg style="left:141.5px;top:102px" width="7" height="4" viewBox="0 0 7 4"><path d="M0 0h7L3.500 4z" fill="#c6c6c6"/></svg>
<svg style="left:701.5px;top:103px" width="7" height="4" viewBox="0 0 7 4"><path d="M0 0h7L3.5 4z" fill="#555"/></svg>
<div class="a" style="left:3px;top:120px;width:30px;height:934px;background:linear-gradient(90deg,#f9f9f9,#f0f0f0)"></div>
<div class="a" style="left:33px;top:120px;width:1px;height:934px;background:#b8b8b8"></div>
<div class="a" style="left:12px;top:125px;width:16px;height:5px;background-image:radial-gradient(circle,#bdbdbd 0.7px,transparent 0.9px);background-size:3px 3px"></div>
<svg style="left:11px;top:135.5px" width="16" height="16" viewBox="0 0 16 16"><rect x="1" y="5" width="9" height="9" rx=".8" transform="rotate(-18 5 9)" fill="#d86a30"/><rect x="2.500" y="3.500" width="9" height="9" rx=".8" transform="rotate(-8 7 8)" fill="#f0c84a"/><rect x="5" y="1" width="9.500" height="9.500" rx=".8" transform="rotate(8 10 6)" fill="#4d85c8"/><circle cx="12.500" cy="12.500" r="3" fill="#3c9a45"/><path d="M12.500 10.800v3.400M10.800 12.500h3.400" stroke="#fff" stroke-width="1.100"/></svg>
<svg style="left:11px;top:159.5px" width="16" height="16" viewBox="0 0 16 16"><path d="M1 6.500l7-2.500 7 2.500v6l-7 3-7-3z" fill="#e8c020"/><path d="M1 6.500l7 2.500v6.500l-7-3z" fill="#c89c10"/><circle cx="8" cy="4.800" r="4" fill="#5b8cc4" stroke="#2d5a94" stroke-width=".6"/><path d="M5.500 3.500c1-.5 2 0 2 1s-1 1.500-1.800 1.200zM9 2.500l1.500 1-.5 2-1.200-.5z" fill="#ddd"/><rect x="9.500" y="9.500" width="6" height="6" rx="1.200" fill="#f6e9a0" stroke="#d4a900" stroke-width="1.200"/></svg>
<svg style="left:11px;top:183.5px" width="16" height="16" viewBox="0 0 16 16"><path d="M1.500 2.500l4 9 3.500-8.500h4.500" fill="none" stroke="#555" stroke-width="1"/><circle cx="1.500" cy="2.500" r="1.100" fill="#fff" stroke="#555" stroke-width=".7"/><circle cx="5.500" cy="11.500" r="1.100" fill="#fff" stroke="#555" stroke-width=".7"/><circle cx="9" cy="3" r="1" fill="#fff" stroke="#555" stroke-width=".7"/><circle cx="13.500" cy="3" r="1" fill="#fff" stroke="#555" stroke-width=".7"/><rect x="9.500" y="9.500" width="6" height="6" rx="1.200" fill="#f6e9a0" stroke="#d4a900" stroke-width="1.200"/></svg>
<svg style="left:11px;top:207.5px" width="16" height="16" viewBox="0 0 16 16"><path d="M1 15c1-6 5-12 13-14-1 5-5 9-10 10.500z" fill="#6f9bd6" stroke="#3f6fae" stroke-width=".7"/><path d="M1.500 14.500c3-5 6-8.500 11-12" stroke="#dbe8f8" stroke-width=".8" fill="none"/><rect x="9.500" y="9.500" width="6" height="6" rx="1.200" fill="#f6e9a0" stroke="#d4a900" stroke-width="1.200"/></svg>
<svg style="left:11px;top:232px" width="16" height="16" viewBox="0 0 16 16"><rect x="2" y="4" width="11" height="7" rx="1" fill="#5b8cc4"/><path d="M4 2v2.500M6 2v2.500M8 2v2.500M10 2v2.500M12 2v2.500M4 10.500v2.500M6 10.500v2.500M8 10.500v2.500M10 10.500v2.500" stroke="#5b8cc4" stroke-width="1"/><rect x="9.500" y="9.500" width="6" height="6" rx="1.200" fill="#f6e9a0" stroke="#d4a900" stroke-width="1.200"/></svg>
<span class="t" style="left:39.30px;top:122.74px;font-size:13px;line-height:14.937px;letter-spacing:-0.053px;color:#111;">Layers</span>
<div class="a" style="left:355px;top:124px;width:9px;height:9px;border:1px solid #777;border-radius:2.500px"></div>
<svg style="left:355px;top:124px" width="11" height="11" viewBox="0 0 11 11"><rect x="4.500" y="2.500" width="4" height="3.500" rx=".8" fill="none" stroke="#555" stroke-width=".9"/><rect x="2.500" y="4.500" width="4" height="3.500" rx=".8" fill="#efefef" stroke="#555" stroke-width=".9"/></svg>
<div class="a" style="left:369px;top:124px;width:9px;height:9px;border:1px solid #777;border-radius:2.500px"></div>
<svg style="left:369px;top:124px" width="11" height="11" viewBox="0 0 11 11"><path d="M3 3l5 5M8 3l-5 5" stroke="#444" stroke-width="1.600"/></svg>
<svg style="left:43px;top:145.5px" width="16" height="16" viewBox="0 0 16 16"><path d="M1 9l6-6 5 4-6 7z" fill="#f0c84a"/><path d="M1 9l3-3 5 4-3 4z" fill="#5b8cc4"/><path d="M1 9l2.500 2 3.500 3h-3z" fill="#d83a3a"/><path d="M7.500 9.500l6.500-8" stroke="#d8903a" stroke-width="1.800" stroke-linecap="round"/><path d="M5 9l4 3-1.500 2.500-4-3z" fill="#c89a5a" stroke="#8a6a3a" stroke-width=".5"/></svg>
<svg style="left:68px;top:145.5px" width="16" height="16" viewBox="0 0 16 16"><path d="M1.500 6v9h9" fill="none" stroke="#666" stroke-width="1"/><path d="M3.500 4v9h9v-9z" fill="#f4f4f4" stroke="#666" stroke-width="1"/><path d="M6 9v-6.500a1.500 1.500 0 0 1 3 0v7" stroke="#3f6fae" stroke-width="1.200" fill="none"/><circle cx="12.500" cy="12.500" r="3" fill="#3c9a45"/><circle cx="12.500" cy="12.500" r="1.400" fill="#e8f6e8"/></svg>
<svg style="left:93px;top:145.5px" width="16" height="16" viewBox="0 0 16 16"><path d="M.5 7.500c2.500-4 9.500-4.500 13 0-3 4-10 4.500-13 0z" fill="#fafafa" stroke="#9a9a9a" stroke-width=".9"/><circle cx="7" cy="7.200" r="2.800" fill="#5b8cc4"/><circle cx="7" cy="7" r="1.200" fill="#123"/><path d="M1 5.500c3-3 8-3.500 12-1" stroke="#b4b4b4" stroke-width=".8" fill="none"/><path d="M10 12.500h5.500l-2.700 3z" fill="#555"/></svg>
<svg style="left:118px;top:145.5px" width="16" height="16" viewBox="0 0 16 16"><path d="M1 2h14l-5.500 6.500v6.500h-3v-6.500z" fill="#5b8cc4"/><rect x="1" y="1" width="14" height="2" rx="1" fill="#f0d84a"/></svg>
<svg style="left:143px;top:145.5px" width="16" height="16" viewBox="0 0 16 16"><text x="5" y="10.500" font-family="Liberation Serif, serif" font-size="15" text-anchor="middle" fill="#6a1f7a">ε</text><path d="M8 9.500h7.500l-2.300 3v3.500h-2.900v-3.500z" fill="#a9a9a9"/><rect x="8" y="8.800" width="7.500" height="1.400" rx=".7" fill="#e0e0e0"/></svg>
<svg style="left:180px;top:145.5px" width="16" height="16" viewBox="0 0 16 16"><path d="M2.500 1v13.500M1 1.500h10M1 14h3" stroke="#8a8a8a" stroke-width=".8" fill="none"/><rect x="3.500" y="4.500" width="3" height="3" fill="#fff" stroke="#f09a20" stroke-width="1.100"/><rect x="3.500" y="10" width="3" height="3" fill="#fff" stroke="#f09a20" stroke-width="1.100"/><path d="M9 1h3.500v8h3l-4.700 6-4.800-6h3z" fill="#3f78c0"/></svg>
<svg style="left:205px;top:145.5px" width="16" height="16" viewBox="0 0 16 16"><path d="M2.500 1v13.500M1 1.500h10M1 14h3" stroke="#8a8a8a" stroke-width=".8" fill="none"/><rect x="3.500" y="4.500" width="3" height="3" fill="#fff" stroke="#f09a20" stroke-width="1.100"/><rect x="3.500" y="10" width="3" height="3" fill="#fff" stroke="#f09a20" stroke-width="1.100"/><path d="M9.500 15h3.500v-8h3l-4.700-6-4.800 6h3z" fill="#3f78c0"/></svg>
<svg style="left:230px;top:145.5px" width="16" height="16" viewBox="0 0 16 16"><rect x="1" y="1.500" width="11.500" height="11.500" rx="1" fill="#fdfdfd" stroke="#777" stroke-width="1"/><rect x="9.500" y="11" width="6.500" height="4.500" rx="1.600" fill="#e83030"/><path d="M11 13.250h3.500" stroke="#fff" stroke-width="1.200"/></svg>
<svg style="left:165.5px;top:151.5px" width="7" height="4" viewBox="0 0 7 4"><path d="M0 0h7L3.5 4z" fill="#555"/></svg>
<div class="a" style="left:35px;top:170px;width:345px;height:855px;border:1px solid #b6b6b6;background:#fff"></div>
<div class="a" style="left:36px;top:207px;width:345px;height:18px;background:#308cc6"></div>
<div class="a" style="left:59px;top:173px;width:12px;height:12px;border:1px solid #b9b9b9;border-radius:1.500px;background:#fff"></div>
<div class="a" style="left:79px;top:172px;width:16px;height:16px;background:#2d039b;box-shadow:inset 0 0 0 1px rgba(0,0,0,.38)"></div>
<span class="t" style="left:101.40px;top:173.74px;font-size:13px;line-height:14.937px;letter-spacing:0.379px;color:#bebebe;font-weight:bold;">road_school_buffers_intersect</span>
<div class="a" style="left:59px;top:191px;width:12px;height:12px;border:1px solid #b9b9b9;border-radius:1.500px;background:#fff"></div>
<div class="a" style="left:79px;top:190px;width:16px;height:16px;background:#33a02c;box-shadow:inset 0 0 0 1px rgba(0,0,0,.38)"></div>
<span class="t" style="left:101.40px;top:191.74px;font-size:13px;line-height:14.937px;letter-spacing:0.375px;color:#bebebe;font-weight:bold;">buildings_34S</span>
<div class="a" style="left:59px;top:209px;width:12px;height:12px;border:1px solid #b9b9b9;border-radius:1.500px;background:#fff"></div>
<svg style="left:59px;top:209px" width="14" height="14" viewBox="0 0 14 14"><path d="M3.200 7.200l2.600 3 4.600-7" stroke="#000" stroke-width="1.700" fill="none"/></svg>
<div class="a" style="left:79px;top:216px;width:16px;height:1px;background:#2450ff"></div>
<span class="t" style="left:101.40px;top:209.74px;font-size:13px;line-height:14.937px;letter-spacing:0.305px;color:#fff;font-weight:bold;text-decoration:underline;text-underline-offset:1.500px;">roads_34S</span>
<div class="a" style="left:59px;top:227px;width:12px;height:12px;border:1px solid #b9b9b9;border-radius:1.500px;background:#fff"></div>
<svg style="left:59px;top:227px" width="14" height="14" viewBox="0 0 14 14"><path d="M3.200 7.200l2.600 3 4.600-7" stroke="#000" stroke-width="1.700" fill="none"/></svg>
<div class="a" style="left:79px;top:226px;width:16px;height:16px;background:#e5b636;box-shadow:inset 0 0 0 1px rgba(0,0,0,.38)"></div>
<span class="t" style="left:101.40px;top:227.74px;font-size:13px;line-height:14.937px;letter-spacing:0.499px;color:#000;font-weight:bold;">houses_restaurants_500m</span>
<div class="a" style="left:59px;top:245px;width:12px;height:12px;border:1px solid #b9b9b9;border-radius:1.500px;background:#fff"></div>
<svg style="left:59px;top:245px" width="14" height="14" viewBox="0 0 14 14"><path d="M3.200 7.200l2.600 3 4.600-7" stroke="#000" stroke-width="1.700" fill="none"/></svg>
<div class="a" style="left:79px;top:244px;width:16px;height:16px;background:#c43c39;box-shadow:inset 0 0 0 1px rgba(0,0,0,.38)"></div>
<span class="t" style="left:101.40px;top:245.74px;font-size:13px;line-height:14.937px;letter-spacing:0.339px;color:#000;font-weight:bold;">well_located_houses</span>
<div class="a" style="left:59px;top:263px;width:12px;height:12px;border:1px solid #b9b9b9;border-radius:1.500px;background:#fff"></div>
<svg style="left:59px;top:263px" width="14" height="14" viewBox="0 0 14 14"><path d="M3.200 7.200l2.600 3 4.600-7" stroke="#000" stroke-width="1.700" fill="none"/></svg>
<div class="a" style="left:79px;top:262px;width:16px;height:16px;background:#9b7fc2;box-shadow:inset 0 0 0 1px rgba(0,0,0,.38)"></div>
<span class="t" style="left:101.40px;top:263.74px;font-size:13px;line-height:14.937px;letter-spacing:0.556px;color:#000;font-weight:bold;">restaurants_34S</span>
<div class="a" style="left:59px;top:281px;width:12px;height:12px;border:1px solid #b9b9b9;border-radius:1.500px;background:#fff"></div>
<div class="a" style="left:79px;top:280px;width:16px;height:16px;background:#f4a3b4;box-shadow:inset 0 0 0 1px rgba(0,0,0,.38)"></div>
<span class="t" style="left:101.40px;top:281.74px;font-size:13px;line-height:14.937px;letter-spacing:0.138px;color:#bebebe;font-weight:bold;">schools_34S</span>
<div class="a" style="left:59px;top:299px;width:12px;height:12px;border:1px solid #b9b9b9;border-radius:1.500px;background:#fff"></div>
<div class="a" style="left:79px;top:298px;width:16px;height:16px;background:#8d5a2f;box-shadow:inset 0 0 0 1px rgba(0,0,0,.38)"></div>
<span class="t" style="left:101.40px;top:299.74px;font-size:13px;line-height:14.937px;letter-spacing:0.411px;color:#bebebe;font-weight:bold;">landuse_34S</span>
<div class="a" style="left:59px;top:317px;width:12px;height:12px;border:1px solid #b9b9b9;border-radius:1.500px;background:#fff"></div>
<svg style="left:80px;top:317px" width="14" height="14" viewBox="0 0 14 14"><rect width="14" height="14" fill="#eef2f8"/><rect x="0" y="0" width="4.500" height="4.500" fill="#23364f"/><rect x="9" y="0" width="5" height="4.500" fill="#2f4a6e"/><rect x="4.500" y="4.500" width="4.500" height="4.500" fill="#1d2c42"/><rect x="0" y="9" width="4.500" height="5" fill="#2f4a6e"/><rect x="9" y="9" width="5" height="5" fill="#a9c4e8"/><rect x="9" y="4.500" width="5" height="4.500" fill="#c8d8ee"/></svg>
<span class="t" style="left:101.40px;top:317.74px;font-size:13px;line-height:14.937px;letter-spacing:0.764px;color:#bebebe;font-weight:bold;">OpenStreetMap</span>
<svg style="left:42px;top:322px" width="8" height="5" viewBox="0 0 8 5"><path d="M0 0h8l-4 5z" fill="#444"/></svg>
<div class="a" style="left:36px;top:1028px;width:346px;height:1px;background:#b6b6b6"></div>
<div class="a" style="left:35px;top:1029px;width:72px;height:21px;border:1px solid #bcbcbc;border-top:none;border-radius:0 0 3px 3px;background:linear-gradient(#dedede,#e4e4e4)"></div>
<div class="a" style="left:108px;top:1028px;width:62px;height:24px;border:1px solid #bcbcbc;border-top:1px solid #f7f7f7;border-radius:0 0 3px 3px;background:#f5f5f5"></div>
<span class="t" style="left:47.00px;top:1032.93px;font-size:13px;line-height:14.937px;letter-spacing:0.118px;color:#111;">Browser</span>
<span class="t" style="left:120.00px;top:1033.93px;font-size:13px;line-height:14.937px;letter-spacing:0.080px;color:#111;">Layers</span>
<div class="a" style="left:384px;top:578px;width:2px;height:20px;background-image:radial-gradient(circle,#c4c4c4 0.700px,transparent 0.900px);background-size:2px 3px"></div>
<div class="a" style="left:388px;top:120px;width:1535px;height:934px;background:#b9b9b9"></div>
<div class="a" style="left:389px;top:121px;width:1534px;height:932px;background:#fff"></div>
<svg style="left:389px;top:121px" width="1534" height="932" viewBox="389 121 1534 932">
<defs><clipPath id="cR0"><rect x="1080" y="780" width="200" height="113"/></clipPath><clipPath id="cR1"><rect x="1190" y="640" width="320" height="140"/><rect x="1280" y="780" width="230" height="40"/></clipPath><clipPath id="cR2"><rect x="1190" y="640" width="320" height="140"/><rect x="1280" y="780" width="230" height="40"/></clipPath><clipPath id="cR3"><rect x="1060" y="893" width="320" height="160"/><rect x="1280" y="873" width="100" height="20"/><rect x="1060" y="873" width="20" height="20"/></clipPath><clipPath id="cR4"><rect x="1080" y="720" width="110" height="60"/><rect x="1280" y="820" width="120" height="53"/></clipPath><clipPath id="cR5"><rect x="1080" y="720" width="110" height="60"/><rect x="1280" y="820" width="120" height="53"/></clipPath><clipPath id="cT11"><rect x="1080" y="780" width="200" height="113"/></clipPath><clipPath id="cT12"><rect x="1190" y="640" width="320" height="140"/><rect x="1280" y="780" width="230" height="40"/></clipPath><clipPath id="cT13"><rect x="1060" y="893" width="320" height="160"/><rect x="1280" y="873" width="100" height="20"/><rect x="1060" y="873" width="20" height="20"/></clipPath><clipPath id="cT15"><rect x="1080" y="720" width="110" height="60"/><rect x="1280" y="820" width="120" height="53"/></clipPath></defs>
<g clip-path="url(#cR0)" fill="none"><path d="M1089.9 805.0L1105.0 790.4M1100.8 803.4L1093.5 813.3L1090.4 841.4L1095.6 849.2L1111.2 863.2M1097.2 815.4L1095.6 839.8L1104.5 848.7L1109.1 846.6M1105.5 815.9L1104.5 838.3L1110.2 845.6L1115.4 841.4M1110.2 814.3L1109.1 834.1L1114.3 839.3M1102.4 802.4L1114.3 795.6M1106.5 806.5L1114.3 801.3M1120.1 793.5L1136.7 809.1M1117.5 799.3L1138.3 821.1M1127.3 810.2L1142.4 823.7M1142.4 825.8L1151.8 835.2M1153.4 836.7L1172.6 853.4M1160.1 827.3L1171.6 838.8M1169.5 829.9L1182.0 820.1M1173.7 804.5L1185.1 816.4M1178.9 808.1L1183.0 814.3M1132.0 836.7L1144.5 848.2L1167.4 866.9M1143.5 852.8L1152.8 861.7M1119.5 847.6L1126.8 854.9M1096.6 852.8L1110.2 864.8M1114.3 859.1L1124.7 849.7M1121.6 862.2L1129.9 870.5M1129.9 859.1L1134.1 857.5M1086.2 863.2L1084.7 878.9L1093.5 887.2M1090.4 861.7L1091.4 870.5M1098.7 871.6L1116.4 888.2M1105.0 869.5L1124.7 887.2M1114.3 869.5L1138.3 891.3M1110.2 888.2L1121.6 888.7M1142.4 861.7L1148.7 867.9M1152.8 866.9L1146.6 874.2M1151.8 873.7L1162.2 883.0M1144.5 883.0L1152.8 891.3M1161.2 884.1L1178.9 875.2M1163.2 889.8L1173.7 879.9M1184.1 876.8L1194.5 888.7M1188.2 872.6L1192.9 877.8M1199.7 884.1L1201.7 887.7M1113.3 785.2L1128.9 781.6M1132.5 781.6L1142.4 788.8M1151.8 784.7L1173.7 784.2M1157.0 795.6L1161.2 791.4M1163.2 799.8L1175.7 794.6M1138.3 796.6L1146.6 799.8M1186.1 802.4L1187.2 798.7L1225.7 795.6M1198.6 803.9L1225.7 800.8M1202.8 808.1L1227.8 806.5M1204.9 813.3L1211.1 814.3M1217.4 818.5L1230.9 823.2M1219.4 814.3L1229.8 815.4M1227.8 795.6L1233.0 809.1M1235.0 790.4L1240.2 807.1M1236.1 814.3L1242.3 810.2M1236.1 823.7L1244.4 828.4M1242.3 814.3L1245.5 821.6M1250.7 811.2L1256.9 819.5M1251.7 827.9L1259.0 831.0M1249.6 832.0L1277.7 851.8M1256.9 825.8L1280.3 842.4M1265.2 823.7L1280.3 834.1M1184.1 783.1L1194.5 781.0M1200.7 786.2L1214.2 782.1M1218.4 789.4L1230.9 785.2M1240.2 790.4L1259.0 784.2M1244.4 797.2L1248.6 796.6M1246.5 805.5L1250.7 804.5M1255.9 802.4L1265.2 799.3M1266.3 781.0L1272.5 799.8" stroke="#3a1c1a" stroke-width="2.6" stroke-dasharray="2.6 1.7 2 2.3 3.4 1.6 2.2 2.8"/><path d="M1089.9 805.0L1105.0 790.4M1100.8 803.4L1093.5 813.3L1090.4 841.4L1095.6 849.2L1111.2 863.2M1097.2 815.4L1095.6 839.8L1104.5 848.7L1109.1 846.6M1105.5 815.9L1104.5 838.3L1110.2 845.6L1115.4 841.4M1110.2 814.3L1109.1 834.1L1114.3 839.3M1102.4 802.4L1114.3 795.6M1106.5 806.5L1114.3 801.3M1120.1 793.5L1136.7 809.1M1117.5 799.3L1138.3 821.1M1127.3 810.2L1142.4 823.7M1142.4 825.8L1151.8 835.2M1153.4 836.7L1172.6 853.4M1160.1 827.3L1171.6 838.8M1169.5 829.9L1182.0 820.1M1173.7 804.5L1185.1 816.4M1178.9 808.1L1183.0 814.3M1132.0 836.7L1144.5 848.2L1167.4 866.9M1143.5 852.8L1152.8 861.7M1119.5 847.6L1126.8 854.9M1096.6 852.8L1110.2 864.8M1114.3 859.1L1124.7 849.7M1121.6 862.2L1129.9 870.5M1129.9 859.1L1134.1 857.5M1086.2 863.2L1084.7 878.9L1093.5 887.2M1090.4 861.7L1091.4 870.5M1098.7 871.6L1116.4 888.2M1105.0 869.5L1124.7 887.2M1114.3 869.5L1138.3 891.3M1110.2 888.2L1121.6 888.7M1142.4 861.7L1148.7 867.9M1152.8 866.9L1146.6 874.2M1151.8 873.7L1162.2 883.0M1144.5 883.0L1152.8 891.3M1161.2 884.1L1178.9 875.2M1163.2 889.8L1173.7 879.9M1184.1 876.8L1194.5 888.7M1188.2 872.6L1192.9 877.8M1199.7 884.1L1201.7 887.7M1113.3 785.2L1128.9 781.6M1132.5 781.6L1142.4 788.8M1151.8 784.7L1173.7 784.2M1157.0 795.6L1161.2 791.4M1163.2 799.8L1175.7 794.6M1138.3 796.6L1146.6 799.8M1186.1 802.4L1187.2 798.7L1225.7 795.6M1198.6 803.9L1225.7 800.8M1202.8 808.1L1227.8 806.5M1204.9 813.3L1211.1 814.3M1217.4 818.5L1230.9 823.2M1219.4 814.3L1229.8 815.4M1227.8 795.6L1233.0 809.1M1235.0 790.4L1240.2 807.1M1236.1 814.3L1242.3 810.2M1236.1 823.7L1244.4 828.4M1242.3 814.3L1245.5 821.6M1250.7 811.2L1256.9 819.5M1251.7 827.9L1259.0 831.0M1249.6 832.0L1277.7 851.8M1256.9 825.8L1280.3 842.4M1265.2 823.7L1280.3 834.1M1184.1 783.1L1194.5 781.0M1200.7 786.2L1214.2 782.1M1218.4 789.4L1230.9 785.2M1240.2 790.4L1259.0 784.2M1244.4 797.2L1248.6 796.6M1246.5 805.5L1250.7 804.5M1255.9 802.4L1265.2 799.3M1266.3 781.0L1272.5 799.8" stroke="#c2403a" stroke-width="1.2" stroke-dasharray="1.4 2.9 0.8 3.5 2.2 2.8 1 4" stroke-dashoffset="-0.6"/></g>
<g clip-path="url(#cR1)" fill="none"><path d="M1262.3 734.7L1285.6 727.3M1292.2 728.1L1316.3 742.2L1330.5 781.3L1343.8 817.9M1262.8 736.4L1267.3 751.4M1271.4 739.7L1288.1 734.7L1312.2 748.0M1273.1 745.6L1287.2 741.4L1306.4 751.4L1323.0 783.0M1275.6 753.0L1289.7 790.4M1282.3 753.0L1296.4 787.9M1289.7 756.4L1299.7 784.6M1296.4 756.4L1306.4 784.6M1304.7 756.4L1313.8 784.6M1309.7 749.7L1321.3 783.0M1293.9 802.9L1299.7 820.0M1300.5 801.2L1306.4 820.0M1309.7 797.9L1316.3 820.0M1318.0 794.6L1324.6 820.0M1321.3 787.9L1333.0 820.0M1331.3 786.3L1342.1 820.0M1299.7 789.6L1306.4 788.8" stroke="#2e1a18" stroke-width="2.4" stroke-dasharray="1.9 0.6"/><path d="M1262.3 734.7L1285.6 727.3M1292.2 728.1L1316.3 742.2L1330.5 781.3L1343.8 817.9M1262.8 736.4L1267.3 751.4M1271.4 739.7L1288.1 734.7L1312.2 748.0M1273.1 745.6L1287.2 741.4L1306.4 751.4L1323.0 783.0M1275.6 753.0L1289.7 790.4M1282.3 753.0L1296.4 787.9M1289.7 756.4L1299.7 784.6M1296.4 756.4L1306.4 784.6M1304.7 756.4L1313.8 784.6M1309.7 749.7L1321.3 783.0M1293.9 802.9L1299.7 820.0M1300.5 801.2L1306.4 820.0M1309.7 797.9L1316.3 820.0M1318.0 794.6L1324.6 820.0M1321.3 787.9L1333.0 820.0M1331.3 786.3L1342.1 820.0M1299.7 789.6L1306.4 788.8" stroke="#bd3d38" stroke-width="0.9" stroke-dasharray="0.9 1.6" stroke-dashoffset="-0.5"/></g>
<g clip-path="url(#cR2)" fill="none"><path d="M1191.7 739.7L1214.9 732.3M1230.7 732.3L1235.7 731.1M1191.7 748.0L1214.9 739.7M1224.1 745.6L1234.0 740.6M1191.7 754.7L1218.3 746.4M1225.7 750.5L1245.7 744.7M1226.6 759.7L1244.9 753.0M1191.7 763.0L1224.9 754.7M1191.7 769.7L1223.2 759.7M1229.1 772.1L1249.8 763.8M1191.7 781.3L1228.2 771.3M1234.9 774.6L1254.8 768.0M1249.8 778.0L1256.5 776.3M1260.6 766.3L1261.5 773.0M1263.1 773.0L1271.4 800.4M1193.3 787.9L1229.9 786.3M1191.7 797.9L1228.2 792.9M1241.5 790.4L1261.5 784.6M1245.7 796.2L1249.0 795.4M1256.5 801.2L1263.1 799.6M1233.2 789.6L1239.9 806.2M1191.7 802.1L1223.2 795.4M1203.3 809.5L1223.2 803.7M1206.6 816.2L1228.2 807.9M1234.9 806.2L1244.9 820.0M1248.2 812.9L1256.5 820.0" stroke="#3a1c1a" stroke-width="2.6" stroke-dasharray="2.6 1.7 2 2.3 3.4 1.6 2.2 2.8"/><path d="M1191.7 739.7L1214.9 732.3M1230.7 732.3L1235.7 731.1M1191.7 748.0L1214.9 739.7M1224.1 745.6L1234.0 740.6M1191.7 754.7L1218.3 746.4M1225.7 750.5L1245.7 744.7M1226.6 759.7L1244.9 753.0M1191.7 763.0L1224.9 754.7M1191.7 769.7L1223.2 759.7M1229.1 772.1L1249.8 763.8M1191.7 781.3L1228.2 771.3M1234.9 774.6L1254.8 768.0M1249.8 778.0L1256.5 776.3M1260.6 766.3L1261.5 773.0M1263.1 773.0L1271.4 800.4M1193.3 787.9L1229.9 786.3M1191.7 797.9L1228.2 792.9M1241.5 790.4L1261.5 784.6M1245.7 796.2L1249.0 795.4M1256.5 801.2L1263.1 799.6M1233.2 789.6L1239.9 806.2M1191.7 802.1L1223.2 795.4M1203.3 809.5L1223.2 803.7M1206.6 816.2L1228.2 807.9M1234.9 806.2L1244.9 820.0M1248.2 812.9L1256.5 820.0" stroke="#c2403a" stroke-width="1.2" stroke-dasharray="1.4 2.9 0.8 3.5 2.2 2.8 1 4" stroke-dashoffset="-0.6"/></g>
<g clip-path="url(#cR3)" fill="none"><path d="M1206.3 1013.5L1256.1 987.7M1209.6 1022.6L1239.5 1010.1M1210.4 1029.2L1241.2 1016.0M1212.1 1033.4L1242.8 1020.1M1212.9 1040.1L1246.2 1025.1M1216.2 1045.9L1247.8 1030.9M1242.8 1001.0L1252.8 1022.6M1247.8 997.7L1255.3 1016.0M1254.5 994.3L1262.0 1012.6M1259.5 987.7L1266.9 1004.3M1256.1 1019.3L1263.6 1017.6M1193.0 1019.3L1198.0 1027.6M1200.5 1017.6L1204.6 1027.6M1193.0 1029.2L1193.0 1053.0M1199.6 1029.2L1200.5 1053.0M1203.8 1039.2L1204.6 1053.0M1209.6 1044.2L1226.2 1039.2M1176.4 959.4L1186.3 957.8M1175.5 966.9L1188.0 992.7M1183.8 965.3L1198.0 989.4M1198.0 999.3L1198.0 1009.3M1099.9 924.5L1124.8 897.9M1104.9 929.5L1129.8 902.1M1118.2 922.9L1129.8 907.9M1118.2 930.3L1123.2 928.7L1138.1 920.4M1126.5 938.7L1146.4 925.4M1128.2 932.8L1143.1 922.9M1108.2 934.5L1116.5 952.8L1123.2 956.1M1111.5 937.8L1119.8 954.4M1133.1 946.1L1153.1 934.5M1140.6 947.0L1159.7 936.2M1146.4 956.1L1166.4 942.8M1150.6 959.4L1168.0 947.0M1135.6 957.8L1139.8 963.6M1139.8 906.2L1158.1 922.9M1143.1 902.9L1159.7 917.9M1153.1 892.9L1159.7 902.9M1161.4 884.6L1176.4 875.5M1169.7 897.9L1193.0 891.3M1186.3 879.6L1193.0 888.0M1138.1 972.7L1124.8 996.0M1143.1 974.4L1133.1 992.7M1149.8 972.7L1163.1 981.0M1148.1 984.4L1143.1 999.3M1153.1 986.0L1149.8 1001.0M1158.1 987.7L1154.7 1002.7M1161.4 992.7L1168.0 996.0M1166.4 996.0L1159.7 1011.0M1169.7 999.3L1163.1 1014.3M1174.7 1004.3L1158.1 1039.2M1179.7 1007.6L1163.1 1042.5M1183.8 1014.3L1174.7 1035.9M1186.3 1030.9L1176.4 1049.2M1139.8 1006.0L1151.4 1011.0M1126.5 1011.0L1133.1 1029.2M1133.1 1011.0L1139.8 1027.6M1139.8 1016.0L1146.4 1019.3M1114.9 1019.3L1123.2 1037.6M1118.2 1014.3L1126.5 1004.3M1098.2 1030.9L1089.9 1049.2M1104.9 1029.2L1099.9 1039.2M1108.2 1032.6L1101.6 1049.2M1113.2 1039.2L1108.2 1053.0M1123.2 1042.5L1129.8 1053.0M1129.8 1039.2L1143.1 1034.2M1133.1 1045.9L1148.1 1039.2M1146.4 1032.6L1156.4 1053.0M1153.1 1039.2L1166.4 1049.2M1159.7 1045.9L1166.4 1053.0M1084.9 874.7L1088.3 883.0L1103.2 888.0M1091.6 876.3L1094.9 881.3M1098.2 878.0L1109.9 883.0M1113.2 876.3L1139.8 894.6M1109.9 883.0L1129.8 896.3M1129.8 876.3L1139.8 883.0M1146.4 883.0L1159.7 874.7" stroke="#2e1a18" stroke-width="2.4" stroke-dasharray="1.9 0.6"/><path d="M1206.3 1013.5L1256.1 987.7M1209.6 1022.6L1239.5 1010.1M1210.4 1029.2L1241.2 1016.0M1212.1 1033.4L1242.8 1020.1M1212.9 1040.1L1246.2 1025.1M1216.2 1045.9L1247.8 1030.9M1242.8 1001.0L1252.8 1022.6M1247.8 997.7L1255.3 1016.0M1254.5 994.3L1262.0 1012.6M1259.5 987.7L1266.9 1004.3M1256.1 1019.3L1263.6 1017.6M1193.0 1019.3L1198.0 1027.6M1200.5 1017.6L1204.6 1027.6M1193.0 1029.2L1193.0 1053.0M1199.6 1029.2L1200.5 1053.0M1203.8 1039.2L1204.6 1053.0M1209.6 1044.2L1226.2 1039.2M1176.4 959.4L1186.3 957.8M1175.5 966.9L1188.0 992.7M1183.8 965.3L1198.0 989.4M1198.0 999.3L1198.0 1009.3M1099.9 924.5L1124.8 897.9M1104.9 929.5L1129.8 902.1M1118.2 922.9L1129.8 907.9M1118.2 930.3L1123.2 928.7L1138.1 920.4M1126.5 938.7L1146.4 925.4M1128.2 932.8L1143.1 922.9M1108.2 934.5L1116.5 952.8L1123.2 956.1M1111.5 937.8L1119.8 954.4M1133.1 946.1L1153.1 934.5M1140.6 947.0L1159.7 936.2M1146.4 956.1L1166.4 942.8M1150.6 959.4L1168.0 947.0M1135.6 957.8L1139.8 963.6M1139.8 906.2L1158.1 922.9M1143.1 902.9L1159.7 917.9M1153.1 892.9L1159.7 902.9M1161.4 884.6L1176.4 875.5M1169.7 897.9L1193.0 891.3M1186.3 879.6L1193.0 888.0M1138.1 972.7L1124.8 996.0M1143.1 974.4L1133.1 992.7M1149.8 972.7L1163.1 981.0M1148.1 984.4L1143.1 999.3M1153.1 986.0L1149.8 1001.0M1158.1 987.7L1154.7 1002.7M1161.4 992.7L1168.0 996.0M1166.4 996.0L1159.7 1011.0M1169.7 999.3L1163.1 1014.3M1174.7 1004.3L1158.1 1039.2M1179.7 1007.6L1163.1 1042.5M1183.8 1014.3L1174.7 1035.9M1186.3 1030.9L1176.4 1049.2M1139.8 1006.0L1151.4 1011.0M1126.5 1011.0L1133.1 1029.2M1133.1 1011.0L1139.8 1027.6M1139.8 1016.0L1146.4 1019.3M1114.9 1019.3L1123.2 1037.6M1118.2 1014.3L1126.5 1004.3M1098.2 1030.9L1089.9 1049.2M1104.9 1029.2L1099.9 1039.2M1108.2 1032.6L1101.6 1049.2M1113.2 1039.2L1108.2 1053.0M1123.2 1042.5L1129.8 1053.0M1129.8 1039.2L1143.1 1034.2M1133.1 1045.9L1148.1 1039.2M1146.4 1032.6L1156.4 1053.0M1153.1 1039.2L1166.4 1049.2M1159.7 1045.9L1166.4 1053.0M1084.9 874.7L1088.3 883.0L1103.2 888.0M1091.6 876.3L1094.9 881.3M1098.2 878.0L1109.9 883.0M1113.2 876.3L1139.8 894.6M1109.9 883.0L1129.8 896.3M1129.8 876.3L1139.8 883.0M1146.4 883.0L1159.7 874.7" stroke="#bd3d38" stroke-width="0.9" stroke-dasharray="0.9 1.6" stroke-dashoffset="-0.5"/></g>
<g clip-path="url(#cR4)" fill="none"><path d="M1103.3 774.9L1134.9 763.2M1115.7 778.2L1126.5 775.7M1131.5 770.7L1137.3 769.9M1141.8 764.0L1163.9 757.4M1170.6 755.7L1189.7 749.1M1145.7 772.9L1166.4 765.7M1173.1 764.0L1189.7 758.2M1148.2 780.7L1169.8 773.2" stroke="#3a1c1a" stroke-width="2.6" stroke-dasharray="2.6 1.7 2 2.3 3.4 1.6 2.2 2.8"/><path d="M1103.3 774.9L1134.9 763.2M1115.7 778.2L1126.5 775.7M1131.5 770.7L1137.3 769.9M1141.8 764.0L1163.9 757.4M1170.6 755.7L1189.7 749.1M1145.7 772.9L1166.4 765.7M1173.1 764.0L1189.7 758.2M1148.2 780.7L1169.8 773.2" stroke="#c2403a" stroke-width="1.2" stroke-dasharray="1.4 2.9 0.8 3.5 2.2 2.8 1 4" stroke-dashoffset="-0.6"/></g>
<g clip-path="url(#cR5)" fill="none"><path d="M1293.6 801.4L1306.9 843.0M1299.4 801.4L1311.9 836.4M1304.4 799.8L1316.0 833.0M1311.9 797.3L1321.9 826.4M1319.4 794.8L1329.3 819.7M1324.3 786.5L1334.3 816.4L1329.3 843.0L1316.0 851.3M1329.3 784.8L1342.6 818.1L1336.0 846.3L1316.0 857.1" stroke="#2e1a18" stroke-width="2.4" stroke-dasharray="1.9 0.6"/><path d="M1293.6 801.4L1306.9 843.0M1299.4 801.4L1311.9 836.4M1304.4 799.8L1316.0 833.0M1311.9 797.3L1321.9 826.4M1319.4 794.8L1329.3 819.7M1324.3 786.5L1334.3 816.4L1329.3 843.0L1316.0 851.3M1329.3 784.8L1342.6 818.1L1336.0 846.3L1316.0 857.1" stroke="#bd3d38" stroke-width="0.9" stroke-dasharray="0.9 1.6" stroke-dashoffset="-0.5"/></g>
<g fill="#c13c37" stroke="#241010" stroke-width="0.85">
<g><rect x="906.2" y="794.4" width="6.1" height="4.0" transform="rotate(-38 909.3 796.4)"/><rect x="892.5" y="811.4" width="4.9" height="3.2" transform="rotate(-38 895.0 813.0)"/><rect x="902.7" y="806.2" width="1.9" height="1.6" transform="rotate(-38 903.6 807.0)"/><rect x="892.9" y="834.7" width="1.4" height="1.2" transform="rotate(-38 893.7 835.3)"/><rect x="924.0" y="774.0" width="1.9" height="1.6" transform="rotate(-61 924.9 774.8)"/><rect x="925.9" y="770.4" width="1.9" height="1.6" transform="rotate(-61 926.9 771.2)"/><rect x="927.9" y="766.8" width="1.9" height="1.6" transform="rotate(-61 928.9 767.6)"/><rect x="929.9" y="763.2" width="1.9" height="1.6" transform="rotate(-61 930.9 764.0)"/><rect x="931.9" y="759.6" width="1.9" height="1.6" transform="rotate(-61 932.9 760.4)"/><rect x="933.9" y="756.0" width="1.9" height="1.6" transform="rotate(-61 934.9 756.8)"/><rect x="935.9" y="752.4" width="1.9" height="1.6" transform="rotate(-61 936.9 753.2)"/><rect x="944.9" y="734.1" width="1.9" height="1.6" transform="rotate(-38 945.8 734.9)"/><rect x="949.9" y="725.8" width="1.9" height="1.6" transform="rotate(-61 950.8 726.6)"/><rect x="952.3" y="721.4" width="1.9" height="1.6" transform="rotate(-61 953.3 722.2)"/><rect x="954.8" y="716.9" width="1.9" height="1.6" transform="rotate(-61 955.7 717.7)"/><rect x="957.2" y="712.5" width="1.9" height="1.6" transform="rotate(-61 958.1 713.3)"/><rect x="978.3" y="860.0" width="3.7" height="2.4" transform="rotate(-38 980.1 861.2)"/><rect x="986.5" y="845.5" width="1.9" height="1.6" transform="rotate(-45 987.4 846.3)"/><rect x="991.4" y="840.5" width="1.9" height="1.6" transform="rotate(-45 992.4 841.3)"/><rect x="996.4" y="835.5" width="1.9" height="1.6" transform="rotate(-45 997.4 836.3)"/><rect x="996.7" y="855.6" width="1.4" height="1.2" transform="rotate(-72 997.4 856.2)"/><rect x="998.3" y="850.7" width="1.4" height="1.2" transform="rotate(-72 999.0 851.3)"/><rect x="1001.4" y="843.8" width="1.9" height="1.6" transform="rotate(-38 1002.4 844.6)"/><rect x="1006.4" y="827.2" width="1.9" height="1.6" transform="rotate(-21 1007.4 828.0)"/><rect x="1009.7" y="825.9" width="1.9" height="1.6" transform="rotate(-21 1010.7 826.7)"/><rect x="1013.0" y="824.7" width="1.9" height="1.6" transform="rotate(-21 1014.0 825.5)"/><rect x="1016.4" y="823.5" width="1.9" height="1.6" transform="rotate(-21 1017.3 824.3)"/><rect x="1019.7" y="822.2" width="1.9" height="1.6" transform="rotate(-21 1020.6 823.0)"/><rect x="1004.0" y="822.4" width="1.4" height="1.2" transform="rotate(45 1004.7 823.0)"/><rect x="1007.3" y="825.7" width="1.4" height="1.2" transform="rotate(45 1008.0 826.3)"/><rect x="1014.9" y="812.4" width="1.4" height="1.2" transform="rotate(-49 1015.7 813.0)"/><rect x="1017.9" y="809.1" width="1.4" height="1.2" transform="rotate(-49 1018.6 809.7)"/><rect x="1020.8" y="805.8" width="1.4" height="1.2" transform="rotate(-49 1021.5 806.4)"/><rect x="1023.7" y="802.5" width="1.4" height="1.2" transform="rotate(-49 1024.4 803.1)"/><rect x="1026.6" y="799.1" width="1.4" height="1.2" transform="rotate(-49 1027.3 799.7)"/></g>
<g><rect x="1028.0" y="422.0" width="3.0" height="2.0" transform="rotate(-40 1029.6 423.0)"/><rect x="1033.0" y="417.8" width="3.0" height="2.0" transform="rotate(-40 1034.6 418.8)"/><rect x="1038.0" y="413.7" width="3.0" height="2.0" transform="rotate(-40 1039.5 414.7)"/><rect x="1046.9" y="406.0" width="3.7" height="2.4" transform="rotate(-36 1048.7 407.2)"/><rect x="1052.7" y="401.9" width="3.7" height="2.4" transform="rotate(-36 1054.5 403.1)"/><rect x="1041.3" y="425.3" width="3.0" height="2.0" transform="rotate(-41 1042.9 426.3)"/><rect x="1045.2" y="422.0" width="3.0" height="2.0" transform="rotate(-41 1046.7 423.0)"/><rect x="1049.0" y="418.7" width="3.0" height="2.0" transform="rotate(-41 1050.5 419.7)"/><rect x="1052.8" y="415.4" width="3.0" height="2.0" transform="rotate(-41 1054.3 416.4)"/><rect x="1056.6" y="412.0" width="3.0" height="2.0" transform="rotate(-41 1058.2 413.0)"/><rect x="1060.5" y="408.7" width="3.0" height="2.0" transform="rotate(-41 1062.0 409.7)"/><rect x="973.9" y="409.4" width="4.9" height="3.2" transform="rotate(-38 976.4 411.0)"/><rect x="983.5" y="404.9" width="3.0" height="2.0" transform="rotate(-38 985.0 405.9)"/><rect x="984.1" y="413.1" width="1.9" height="1.6" transform="rotate(-38 985.0 413.9)"/><rect x="1029.1" y="438.1" width="3.7" height="2.4" transform="rotate(-38 1030.9 439.3)"/><rect x="1082.3" y="431.2" width="4.3" height="2.8" transform="rotate(-38 1084.4 432.6)"/><rect x="1067.1" y="446.9" width="3.0" height="2.0" transform="rotate(-32 1068.6 447.9)"/><rect x="1070.9" y="444.6" width="3.0" height="2.0" transform="rotate(-32 1072.4 445.6)"/><rect x="1074.6" y="442.3" width="3.0" height="2.0" transform="rotate(-32 1076.1 443.3)"/><rect x="1053.0" y="463.6" width="3.0" height="2.0" transform="rotate(-42 1054.5 464.6)"/><rect x="1060.5" y="456.9" width="3.0" height="2.0" transform="rotate(-42 1062.0 457.9)"/><rect x="1041.3" y="473.1" width="1.4" height="1.2" transform="rotate(-27 1042.0 473.7)"/><rect x="1049.6" y="468.9" width="1.4" height="1.2" transform="rotate(-27 1050.4 469.5)"/><rect x="1068.8" y="463.6" width="3.0" height="2.0" transform="rotate(-35 1070.3 464.6)"/><rect x="1072.9" y="460.7" width="3.0" height="2.0" transform="rotate(-35 1074.5 461.7)"/><rect x="1077.1" y="457.8" width="3.0" height="2.0" transform="rotate(-35 1078.6 458.8)"/><rect x="1081.2" y="454.9" width="3.0" height="2.0" transform="rotate(-35 1082.8 455.9)"/><rect x="1057.1" y="475.2" width="3.0" height="2.0" transform="rotate(-16 1058.7 476.2)"/><rect x="1063.0" y="473.5" width="3.0" height="2.0" transform="rotate(-16 1064.5 474.5)"/><rect x="1072.7" y="469.6" width="1.9" height="1.6" transform="rotate(-38 1073.6 470.4)"/><rect x="1107.8" y="400.4" width="3.0" height="2.0" transform="rotate(-16 1109.4 401.4)"/><rect x="1114.5" y="398.5" width="3.0" height="2.0" transform="rotate(-16 1116.0 399.5)"/><rect x="1121.1" y="396.7" width="3.0" height="2.0" transform="rotate(-16 1122.7 397.7)"/><rect x="1127.8" y="394.8" width="3.0" height="2.0" transform="rotate(-16 1129.3 395.8)"/><rect x="1134.4" y="392.9" width="3.0" height="2.0" transform="rotate(-16 1136.0 393.9)"/><rect x="1112.0" y="407.0" width="3.0" height="2.0" transform="rotate(-19 1113.5 408.0)"/><rect x="1116.8" y="405.4" width="3.0" height="2.0" transform="rotate(-19 1118.3 406.4)"/><rect x="1121.6" y="403.7" width="3.0" height="2.0" transform="rotate(-19 1123.2 404.7)"/><rect x="1126.5" y="402.1" width="3.0" height="2.0" transform="rotate(-19 1128.0 403.1)"/><rect x="1131.3" y="400.4" width="3.0" height="2.0" transform="rotate(-19 1132.8 401.4)"/><rect x="1136.1" y="398.7" width="3.0" height="2.0" transform="rotate(-19 1137.6 399.7)"/><rect x="1112.8" y="391.3" width="3.0" height="2.0" transform="rotate(-14 1114.3 392.3)"/><rect x="1119.5" y="389.6" width="3.0" height="2.0" transform="rotate(-14 1121.0 390.6)"/><rect x="1131.1" y="386.3" width="3.0" height="2.0" transform="rotate(-38 1132.6 387.3)"/><rect x="1143.3" y="384.4" width="3.7" height="2.4" transform="rotate(-38 1145.1 385.6)"/><rect x="1120.8" y="412.7" width="3.7" height="2.4" transform="rotate(-16 1122.7 413.9)"/><rect x="1126.6" y="411.0" width="3.7" height="2.4" transform="rotate(-16 1128.5 412.2)"/><rect x="1107.8" y="417.0" width="3.0" height="2.0" transform="rotate(-38 1109.4 418.0)"/><rect x="1125.9" y="417.2" width="1.9" height="1.6" transform="rotate(-38 1126.8 418.0)"/><rect x="987.1" y="477.9" width="1.9" height="1.6" transform="rotate(-33 988.0 478.7)"/><rect x="990.6" y="475.6" width="1.9" height="1.6" transform="rotate(-33 991.6 476.4)"/><rect x="994.1" y="473.3" width="1.9" height="1.6" transform="rotate(-33 995.1 474.1)"/><rect x="997.7" y="471.0" width="1.9" height="1.6" transform="rotate(-33 998.6 471.8)"/><rect x="1001.2" y="468.7" width="1.9" height="1.6" transform="rotate(-33 1002.1 469.5)"/><rect x="1006.4" y="467.9" width="4.9" height="3.2" transform="rotate(-38 1008.8 469.5)"/></g>
<g><rect x="972.4" y="490.8" width="1.9" height="1.6" transform="rotate(-29 973.4 491.6)"/><rect x="976.5" y="488.6" width="1.9" height="1.6" transform="rotate(-29 977.5 489.4)"/><rect x="980.6" y="486.3" width="1.9" height="1.6" transform="rotate(-29 981.5 487.1)"/><rect x="984.7" y="484.0" width="1.9" height="1.6" transform="rotate(-29 985.6 484.8)"/><rect x="988.7" y="481.7" width="1.9" height="1.6" transform="rotate(-29 989.7 482.5)"/><rect x="966.0" y="496.9" width="1.4" height="1.2" transform="rotate(-38 966.7 497.5)"/><rect x="972.4" y="504.8" width="3.0" height="2.0" transform="rotate(-37 973.9 505.8)"/><rect x="976.4" y="501.8" width="3.0" height="2.0" transform="rotate(-37 977.9 502.8)"/><rect x="980.3" y="498.8" width="3.0" height="2.0" transform="rotate(-37 981.9 499.8)"/><rect x="984.3" y="495.8" width="3.0" height="2.0" transform="rotate(-37 985.9 496.8)"/><rect x="988.3" y="492.8" width="3.0" height="2.0" transform="rotate(-37 989.8 493.8)"/><rect x="992.3" y="489.8" width="3.0" height="2.0" transform="rotate(-37 993.8 490.8)"/><rect x="1000.4" y="481.7" width="1.9" height="1.6" transform="rotate(60 1001.3 482.5)"/><rect x="1003.7" y="487.5" width="1.9" height="1.6" transform="rotate(60 1004.6 488.3)"/><rect x="978.2" y="511.4" width="3.0" height="2.0" transform="rotate(-33 979.7 512.4)"/><rect x="982.6" y="508.5" width="3.0" height="2.0" transform="rotate(-33 984.1 509.5)"/><rect x="987.0" y="505.6" width="3.0" height="2.0" transform="rotate(-33 988.6 506.6)"/><rect x="991.5" y="502.7" width="3.0" height="2.0" transform="rotate(-33 993.0 503.7)"/><rect x="995.9" y="499.8" width="3.0" height="2.0" transform="rotate(-33 997.4 500.8)"/><rect x="1000.3" y="496.9" width="3.0" height="2.0" transform="rotate(-33 1001.9 497.9)"/><rect x="1004.8" y="494.0" width="3.0" height="2.0" transform="rotate(-33 1006.3 495.0)"/><rect x="987.0" y="522.0" width="3.7" height="2.4" transform="rotate(-29 988.8 523.2)"/><rect x="990.8" y="519.9" width="3.7" height="2.4" transform="rotate(-29 992.6 521.1)"/><rect x="994.5" y="517.9" width="3.7" height="2.4" transform="rotate(-29 996.3 519.1)"/><rect x="1001.5" y="513.1" width="3.0" height="2.0" transform="rotate(-27 1003.0 514.1)"/><rect x="1005.6" y="511.0" width="3.0" height="2.0" transform="rotate(-27 1007.1 512.0)"/><rect x="1009.8" y="508.9" width="3.0" height="2.0" transform="rotate(-27 1011.3 509.9)"/><rect x="1015.3" y="505.5" width="1.9" height="1.6" transform="rotate(-38 1016.3 506.3)"/><rect x="938.3" y="530.5" width="3.0" height="2.0" transform="rotate(-32 939.8 531.5)"/><rect x="942.3" y="528.0" width="3.0" height="2.0" transform="rotate(-32 943.9 529.0)"/><rect x="946.4" y="525.5" width="3.0" height="2.0" transform="rotate(-32 947.9 526.5)"/><rect x="950.4" y="523.0" width="3.0" height="2.0" transform="rotate(-32 951.9 524.0)"/><rect x="954.4" y="520.6" width="3.0" height="2.0" transform="rotate(-32 956.0 521.6)"/><rect x="958.5" y="518.1" width="3.0" height="2.0" transform="rotate(-32 960.0 519.1)"/><rect x="962.5" y="515.6" width="3.0" height="2.0" transform="rotate(-32 964.0 516.6)"/><rect x="966.5" y="513.1" width="3.0" height="2.0" transform="rotate(-32 968.1 514.1)"/><rect x="942.4" y="537.2" width="3.0" height="2.0" transform="rotate(-31 944.0 538.2)"/><rect x="946.6" y="534.7" width="3.0" height="2.0" transform="rotate(-31 948.1 535.7)"/><rect x="950.8" y="532.2" width="3.0" height="2.0" transform="rotate(-31 952.3 533.2)"/><rect x="954.9" y="529.7" width="3.0" height="2.0" transform="rotate(-31 956.4 530.7)"/><rect x="959.1" y="527.2" width="3.0" height="2.0" transform="rotate(-31 960.6 528.2)"/><rect x="963.2" y="524.7" width="3.0" height="2.0" transform="rotate(-31 964.7 525.7)"/><rect x="967.4" y="522.2" width="3.0" height="2.0" transform="rotate(-31 968.9 523.2)"/><rect x="971.5" y="519.7" width="3.0" height="2.0" transform="rotate(-31 973.1 520.7)"/><rect x="947.1" y="542.0" width="3.7" height="2.4" transform="rotate(-38 949.0 543.2)"/><rect x="968.2" y="538.0" width="3.0" height="2.0" transform="rotate(-38 969.7 539.0)"/><rect x="972.1" y="535.0" width="3.0" height="2.0" transform="rotate(-38 973.6 536.0)"/><rect x="976.0" y="531.9" width="3.0" height="2.0" transform="rotate(-38 977.5 532.9)"/><rect x="979.8" y="528.9" width="3.0" height="2.0" transform="rotate(-38 981.4 529.9)"/><rect x="953.5" y="550.1" width="4.3" height="2.8" transform="rotate(-35 955.6 551.5)"/><rect x="957.1" y="547.6" width="4.3" height="2.8" transform="rotate(-35 959.2 549.0)"/><rect x="960.7" y="545.1" width="4.3" height="2.8" transform="rotate(-35 962.8 546.5)"/><rect x="964.3" y="542.6" width="4.3" height="2.8" transform="rotate(-35 966.4 544.0)"/><rect x="957.1" y="555.3" width="3.7" height="2.4" transform="rotate(45 958.9 556.5)"/><rect x="961.3" y="559.4" width="3.7" height="2.4" transform="rotate(45 963.1 560.6)"/><rect x="1022.6" y="496.4" width="6.7" height="4.4" transform="rotate(-38 1025.9 498.6)"/><rect x="1027.1" y="501.9" width="4.3" height="2.8" transform="rotate(-38 1029.2 503.3)"/><rect x="1013.0" y="480.1" width="4.9" height="3.2" transform="rotate(-38 1015.4 481.7)"/><rect x="1175.6" y="649.4" width="5.5" height="3.6" transform="rotate(-38 1178.3 651.2)"/></g>
<g><rect x="1255.5" y="565.6" width="1.9" height="1.6" transform="rotate(-38 1256.5 566.4)"/><rect x="1264.1" y="571.3" width="3.0" height="2.0" transform="rotate(-38 1265.6 572.3)"/><rect x="1246.3" y="576.0" width="3.7" height="2.4" transform="rotate(-38 1248.2 577.2)"/><rect x="1255.8" y="575.4" width="3.0" height="2.0" transform="rotate(-38 1257.3 576.4)"/><rect x="1263.0" y="576.9" width="3.7" height="2.4" transform="rotate(-38 1264.8 578.1)"/><rect x="1251.3" y="583.5" width="3.7" height="2.4" transform="rotate(-38 1253.2 584.7)"/><rect x="1255.5" y="586.8" width="3.7" height="2.4" transform="rotate(-38 1257.3 588.0)"/><rect x="1242.2" y="584.8" width="1.9" height="1.6" transform="rotate(-38 1243.2 585.6)"/><rect x="1246.4" y="588.9" width="1.9" height="1.6" transform="rotate(-38 1247.3 589.7)"/><rect x="1249.4" y="593.3" width="4.3" height="2.8" transform="rotate(-38 1251.5 594.7)"/><rect x="1237.3" y="592.2" width="1.9" height="1.6" transform="rotate(-38 1238.2 593.0)"/><rect x="1233.4" y="596.2" width="3.0" height="2.0" transform="rotate(-38 1234.9 597.2)"/><rect x="1242.7" y="602.4" width="4.3" height="2.8" transform="rotate(-38 1244.9 603.8)"/><rect x="1239.2" y="607.8" width="3.0" height="2.0" transform="rotate(-38 1240.7 608.8)"/><rect x="1227.3" y="603.9" width="1.9" height="1.6" transform="rotate(-38 1228.2 604.7)"/><rect x="1225.3" y="611.6" width="4.3" height="2.8" transform="rotate(-38 1227.4 613.0)"/><rect x="1218.9" y="615.9" width="3.7" height="2.4" transform="rotate(-38 1220.8 617.1)"/><rect x="1223.6" y="619.1" width="4.3" height="2.8" transform="rotate(-38 1225.7 620.5)"/><rect x="1232.2" y="615.9" width="3.7" height="2.4" transform="rotate(-38 1234.0 617.1)"/><rect x="1227.2" y="620.9" width="3.7" height="2.4" transform="rotate(-38 1229.1 622.1)"/><rect x="1212.8" y="622.4" width="4.3" height="2.8" transform="rotate(-38 1214.9 623.8)"/><rect x="1208.6" y="626.5" width="4.3" height="2.8" transform="rotate(-38 1210.8 627.9)"/><rect x="1219.2" y="629.4" width="3.0" height="2.0" transform="rotate(-38 1220.8 630.4)"/><rect x="1212.3" y="635.0" width="3.7" height="2.4" transform="rotate(-38 1214.1 636.2)"/><rect x="1219.0" y="633.8" width="1.9" height="1.6" transform="rotate(-38 1219.9 634.6)"/><rect x="1200.6" y="639.7" width="3.7" height="2.4" transform="rotate(-38 1202.5 640.9)"/><rect x="1205.9" y="642.7" width="3.0" height="2.0" transform="rotate(-38 1207.5 643.7)"/><rect x="1209.8" y="644.2" width="3.7" height="2.4" transform="rotate(-38 1211.6 645.4)"/><rect x="1195.4" y="649.2" width="8.5" height="5.6" transform="rotate(-38 1199.6 652.0)"/><rect x="1254.6" y="603.2" width="5.5" height="3.6" transform="rotate(-38 1257.3 605.0)"/><rect x="1264.7" y="608.9" width="1.9" height="1.6" transform="rotate(-38 1265.6 609.7)"/><rect x="1266.3" y="612.2" width="1.9" height="1.6" transform="rotate(-38 1267.3 613.0)"/><rect x="1260.5" y="616.3" width="1.9" height="1.6" transform="rotate(-38 1261.5 617.1)"/><rect x="1258.9" y="620.5" width="1.9" height="1.6" transform="rotate(-38 1259.8 621.3)"/><rect x="1242.5" y="616.1" width="3.0" height="2.0" transform="rotate(-38 1244.0 617.1)"/><rect x="1250.0" y="617.0" width="3.0" height="2.0" transform="rotate(-38 1251.5 618.0)"/><rect x="1247.5" y="621.6" width="3.0" height="2.0" transform="rotate(-38 1249.0 622.6)"/><rect x="1253.9" y="626.3" width="1.9" height="1.6" transform="rotate(-38 1254.8 627.1)"/><rect x="1251.4" y="629.6" width="1.9" height="1.6" transform="rotate(-38 1252.3 630.4)"/><rect x="1238.3" y="633.6" width="3.0" height="2.0" transform="rotate(-38 1239.9 634.6)"/><rect x="1230.6" y="634.6" width="1.9" height="1.6" transform="rotate(-38 1231.6 635.4)"/><rect x="1243.3" y="636.6" width="3.0" height="2.0" transform="rotate(-38 1244.9 637.6)"/><rect x="1248.9" y="634.6" width="1.9" height="1.6" transform="rotate(-38 1249.8 635.4)"/><rect x="1224.0" y="641.3" width="1.9" height="1.6" transform="rotate(-38 1224.9 642.1)"/><rect x="1221.5" y="645.4" width="1.9" height="1.6" transform="rotate(-38 1222.4 646.2)"/><rect x="1224.8" y="648.7" width="1.9" height="1.6" transform="rotate(-38 1225.7 649.5)"/><rect x="1219.8" y="647.9" width="1.9" height="1.6" transform="rotate(-38 1220.8 648.7)"/><rect x="1380.5" y="574.6" width="3.0" height="2.0" transform="rotate(-38 1382.0 575.6)"/><rect x="1366.7" y="580.1" width="3.0" height="2.0" transform="rotate(-38 1368.2 581.1)"/><rect x="1345.2" y="584.5" width="1.4" height="1.2" transform="rotate(-38 1345.9 585.1)"/></g>
<g><rect x="954.6" y="712.3" width="3.7" height="2.4" transform="rotate(-38 956.4 713.5)"/><rect x="950.5" y="717.7" width="1.9" height="1.6" transform="rotate(-38 951.4 718.5)"/><rect x="954.7" y="719.9" width="1.9" height="1.6" transform="rotate(-38 955.6 720.7)"/><rect x="949.1" y="726.3" width="3.0" height="2.0" transform="rotate(-38 950.6 727.3)"/><rect x="958.2" y="728.8" width="3.0" height="2.0" transform="rotate(-38 959.8 729.8)"/><rect x="964.9" y="724.2" width="1.4" height="1.2" transform="rotate(-38 965.6 724.8)"/><rect x="944.1" y="733.6" width="3.7" height="2.4" transform="rotate(-38 946.0 734.8)"/><rect x="974.0" y="730.0" width="1.4" height="1.2" transform="rotate(-38 974.7 730.6)"/><rect x="926.6" y="769.9" width="1.5" height="1.3" transform="rotate(-60 927.3 770.5)"/><rect x="928.0" y="767.4" width="1.5" height="1.3" transform="rotate(-60 928.8 768.0)"/><rect x="929.4" y="764.9" width="1.5" height="1.3" transform="rotate(-60 930.2 765.6)"/><rect x="930.9" y="762.4" width="1.5" height="1.3" transform="rotate(-60 931.6 763.1)"/><rect x="932.3" y="759.9" width="1.5" height="1.3" transform="rotate(-60 933.0 760.6)"/><rect x="933.7" y="757.4" width="1.5" height="1.3" transform="rotate(-60 934.5 758.1)"/><rect x="935.1" y="754.9" width="1.5" height="1.3" transform="rotate(-60 935.9 755.6)"/><rect x="936.6" y="752.4" width="1.5" height="1.3" transform="rotate(-60 937.3 753.1)"/><rect x="921.7" y="773.8" width="3.7" height="2.4" transform="rotate(-38 923.5 775.0)"/><rect x="906.3" y="794.2" width="5.5" height="3.6" transform="rotate(-38 909.1 796.0)"/><rect x="892.2" y="810.8" width="5.5" height="3.6" transform="rotate(-38 894.9 812.6)"/><rect x="903.4" y="806.5" width="1.4" height="1.2" transform="rotate(-38 904.1 807.1)"/><rect x="893.4" y="834.8" width="1.4" height="1.2" transform="rotate(-38 894.1 835.4)"/><rect x="960.3" y="756.6" width="1.5" height="1.3" transform="rotate(-60 961.1 757.2)"/><rect x="961.9" y="753.8" width="1.5" height="1.3" transform="rotate(-60 962.7 754.4)"/><rect x="963.5" y="751.0" width="1.5" height="1.3" transform="rotate(-60 964.3 751.6)"/><rect x="965.1" y="748.2" width="1.5" height="1.3" transform="rotate(-60 965.9 748.8)"/><rect x="966.7" y="745.4" width="1.5" height="1.3" transform="rotate(-60 967.5 746.0)"/><rect x="968.3" y="742.6" width="1.5" height="1.3" transform="rotate(-60 969.1 743.2)"/><rect x="969.9" y="739.8" width="1.5" height="1.3" transform="rotate(-60 970.7 740.4)"/><rect x="971.5" y="737.0" width="1.5" height="1.3" transform="rotate(-60 972.3 737.6)"/><rect x="973.1" y="734.2" width="1.5" height="1.3" transform="rotate(-60 973.9 734.8)"/><rect x="971.3" y="751.5" width="1.9" height="1.6" transform="rotate(-52 972.2 752.3)"/><rect x="973.8" y="748.3" width="1.9" height="1.6" transform="rotate(-52 974.7 749.1)"/><rect x="976.3" y="745.1" width="1.9" height="1.6" transform="rotate(-52 977.2 745.9)"/><rect x="978.8" y="742.0" width="1.9" height="1.6" transform="rotate(-52 979.7 742.8)"/><rect x="981.3" y="738.8" width="1.9" height="1.6" transform="rotate(-52 982.2 739.6)"/><rect x="983.7" y="735.7" width="1.9" height="1.6" transform="rotate(-52 984.7 736.5)"/><rect x="975.4" y="749.8" width="1.9" height="1.6" transform="rotate(-43 976.4 750.6)"/><rect x="978.8" y="746.7" width="1.9" height="1.6" transform="rotate(-43 979.7 747.5)"/><rect x="982.1" y="743.7" width="1.9" height="1.6" transform="rotate(-43 983.0 744.5)"/><rect x="985.4" y="740.6" width="1.9" height="1.6" transform="rotate(-43 986.4 741.4)"/><rect x="964.9" y="762.1" width="3.0" height="2.0" transform="rotate(-40 966.4 763.1)"/><rect x="967.4" y="760.0" width="3.0" height="2.0" transform="rotate(-40 968.9 761.0)"/><rect x="969.9" y="757.9" width="3.0" height="2.0" transform="rotate(-40 971.4 758.9)"/><rect x="975.4" y="761.9" width="1.9" height="1.6" transform="rotate(-40 976.4 762.7)"/><rect x="978.3" y="759.5" width="1.9" height="1.6" transform="rotate(-40 979.3 760.3)"/><rect x="981.3" y="757.1" width="1.9" height="1.6" transform="rotate(-40 982.2 757.9)"/><rect x="984.2" y="754.7" width="1.9" height="1.6" transform="rotate(-40 985.1 755.5)"/><rect x="987.1" y="752.3" width="1.9" height="1.6" transform="rotate(-40 988.0 753.1)"/><rect x="984.6" y="765.6" width="1.9" height="1.6" transform="rotate(-32 985.5 766.4)"/><rect x="988.2" y="763.4" width="1.9" height="1.6" transform="rotate(-32 989.1 764.2)"/><rect x="991.8" y="761.2" width="1.9" height="1.6" transform="rotate(-32 992.7 762.0)"/><rect x="995.4" y="758.9" width="1.9" height="1.6" transform="rotate(-32 996.3 759.7)"/><rect x="985.4" y="768.9" width="1.9" height="1.6" transform="rotate(-38 986.4 769.7)"/><rect x="994.5" y="768.1" width="1.9" height="1.6" transform="rotate(-38 995.5 768.9)"/><rect x="993.7" y="749.0" width="1.9" height="1.6" transform="rotate(-38 994.7 749.8)"/><rect x="1004.6" y="739.8" width="6.1" height="4.0" transform="rotate(-38 1007.6 741.8)"/><rect x="1010.3" y="747.3" width="1.9" height="1.6" transform="rotate(-38 1011.3 748.1)"/><rect x="1017.6" y="749.9" width="7.3" height="4.8" transform="rotate(-38 1021.3 752.3)"/><rect x="1056.0" y="763.5" width="3.7" height="2.4" transform="rotate(-38 1057.8 764.7)"/><rect x="1062.9" y="762.5" width="1.4" height="1.2" transform="rotate(-38 1063.7 763.1)"/><rect x="1067.7" y="755.6" width="1.9" height="1.6" transform="rotate(-18 1068.6 756.4)"/><rect x="1072.7" y="753.9" width="1.9" height="1.6" transform="rotate(-18 1073.6 754.7)"/><rect x="1080.1" y="746.9" width="3.7" height="2.4" transform="rotate(-38 1081.9 748.1)"/><rect x="1086.8" y="741.5" width="1.9" height="1.6" transform="rotate(-31 1087.8 742.3)"/><rect x="1089.6" y="739.8" width="1.9" height="1.6" transform="rotate(-31 1090.5 740.6)"/><rect x="1092.3" y="738.2" width="1.9" height="1.6" transform="rotate(-31 1093.3 739.0)"/><rect x="1095.1" y="736.5" width="1.9" height="1.6" transform="rotate(-31 1096.1 737.3)"/><rect x="1100.9" y="731.5" width="1.9" height="1.6" transform="rotate(-41 1101.9 732.3)"/><rect x="1103.4" y="729.3" width="1.9" height="1.6" transform="rotate(-41 1104.4 730.1)"/><rect x="1105.9" y="727.2" width="1.9" height="1.6" transform="rotate(-41 1106.9 728.0)"/><rect x="1108.4" y="725.0" width="1.9" height="1.6" transform="rotate(-41 1109.4 725.8)"/><rect x="1110.9" y="722.9" width="1.9" height="1.6" transform="rotate(-41 1111.9 723.7)"/><rect x="1113.4" y="720.7" width="1.9" height="1.6" transform="rotate(-41 1114.3 721.5)"/><rect x="1122.5" y="715.2" width="3.0" height="2.0" transform="rotate(-38 1124.0 716.2)"/><rect x="1055.0" y="777.4" width="3.0" height="2.0" transform="rotate(-38 1056.5 778.4)"/><rect x="1044.4" y="791.3" width="1.9" height="1.6" transform="rotate(-53 1045.4 792.1)"/><rect x="1046.9" y="788.0" width="1.9" height="1.6" transform="rotate(-53 1047.9 788.8)"/><rect x="1033.0" y="791.1" width="3.0" height="2.0" transform="rotate(-38 1034.6 792.1)"/><rect x="1023.9" y="796.5" width="1.4" height="1.2" transform="rotate(-8 1024.6 797.1)"/><rect x="1026.8" y="796.1" width="1.4" height="1.2" transform="rotate(-8 1027.5 796.7)"/><rect x="1029.7" y="795.7" width="1.4" height="1.2" transform="rotate(-8 1030.4 796.3)"/><rect x="1018.1" y="802.4" width="1.4" height="1.2" transform="rotate(36 1018.8 803.0)"/><rect x="1021.0" y="804.4" width="1.4" height="1.2" transform="rotate(36 1021.7 805.0)"/><rect x="1023.9" y="806.5" width="1.4" height="1.2" transform="rotate(36 1024.6 807.1)"/><rect x="1028.0" y="800.7" width="1.4" height="1.2" transform="rotate(-38 1028.7 801.3)"/><rect x="1014.7" y="811.5" width="1.4" height="1.2" transform="rotate(-38 1015.4 812.1)"/><rect x="1003.6" y="822.0" width="1.4" height="1.2" transform="rotate(-38 1004.3 822.6)"/><rect x="1007.3" y="825.3" width="1.4" height="1.2" transform="rotate(-38 1008.0 825.9)"/><rect x="1008.0" y="833.9" width="1.5" height="1.3" transform="rotate(-47 1008.8 834.5)"/><rect x="1010.4" y="831.4" width="1.5" height="1.3" transform="rotate(-47 1011.1 832.0)"/><rect x="1012.7" y="828.9" width="1.5" height="1.3" transform="rotate(-47 1013.5 829.5)"/><rect x="1015.0" y="826.4" width="1.5" height="1.3" transform="rotate(-47 1015.8 827.1)"/><rect x="1017.3" y="823.9" width="1.5" height="1.3" transform="rotate(-47 1018.1 824.6)"/><rect x="1019.7" y="821.4" width="1.5" height="1.3" transform="rotate(-47 1020.4 822.1)"/><rect x="995.4" y="836.2" width="1.9" height="1.6" transform="rotate(-38 996.3 837.0)"/><rect x="1168.1" y="678.1" width="5.5" height="3.6" transform="rotate(-38 1170.9 679.9)"/><rect x="1162.1" y="686.0" width="4.3" height="2.8" transform="rotate(-38 1164.2 687.4)"/><rect x="1174.3" y="668.1" width="3.0" height="2.0" transform="rotate(-38 1175.9 669.1)"/><rect x="1146.1" y="685.3" width="3.0" height="2.0" transform="rotate(-38 1147.6 686.3)"/><rect x="1154.4" y="697.2" width="3.0" height="2.0" transform="rotate(-38 1155.9 698.2)"/><rect x="1122.5" y="697.1" width="1.9" height="1.6" transform="rotate(-38 1123.5 697.9)"/><rect x="1124.2" y="676.3" width="3.7" height="2.4" transform="rotate(-38 1126.0 677.5)"/><rect x="1179.1" y="698.3" width="1.9" height="1.6" transform="rotate(-38 1180.0 699.1)"/><rect x="1176.6" y="704.1" width="1.9" height="1.6" transform="rotate(-38 1177.5 704.9)"/><rect x="1184.2" y="714.9" width="4.9" height="3.2" transform="rotate(-38 1186.7 716.5)"/><rect x="1160.3" y="731.0" width="1.9" height="1.6" transform="rotate(-38 1161.2 731.8)"/></g>
<g clip-path="url(#cT11)"><rect x="1118.6" y="802.1" width="6.1" height="4.0" transform="rotate(-38 1121.6 804.1)"/><rect x="1134.1" y="849.4" width="7.3" height="4.8" transform="rotate(-38 1137.8 851.8)"/><rect x="1179.3" y="843.8" width="8.5" height="5.6" transform="rotate(-38 1183.5 846.6)"/><rect x="1190.0" y="818.5" width="7.9" height="5.2" transform="rotate(-38 1193.9 821.1)"/><rect x="1200.3" y="823.8" width="6.1" height="4.0" transform="rotate(-38 1203.3 825.8)"/><rect x="1206.4" y="824.2" width="4.9" height="3.2" transform="rotate(-38 1208.8 825.8)"/><rect x="1221.9" y="838.0" width="17.0" height="2.2" transform="rotate(23 1230.4 839.1)"/><rect x="1233.6" y="835.0" width="6.1" height="4.0" transform="rotate(-38 1236.6 837.0)"/><rect x="1162.9" y="808.6" width="4.9" height="3.2" transform="rotate(-38 1165.3 810.2)"/><rect x="1162.9" y="814.8" width="4.9" height="3.2" transform="rotate(-38 1165.3 816.4)"/><rect x="1154.0" y="817.5" width="6.1" height="4.0" transform="rotate(-38 1157.0 819.5)"/><rect x="1172.7" y="803.5" width="6.1" height="4.0" transform="rotate(-38 1175.7 805.5)"/><rect x="1189.5" y="840.7" width="3.7" height="2.4" transform="rotate(-38 1191.3 841.9)"/><rect x="1185.4" y="829.3" width="3.7" height="2.4" transform="rotate(-38 1187.2 830.5)"/><rect x="1171.5" y="841.0" width="4.3" height="2.8" transform="rotate(-38 1173.7 842.4)"/><rect x="1166.0" y="838.8" width="4.9" height="3.2" transform="rotate(-38 1168.4 840.4)"/><rect x="1222.8" y="831.9" width="3.7" height="2.4" transform="rotate(-38 1224.6 833.1)"/></g>
<g clip-path="url(#cT12)"><rect x="1194.5" y="648.0" width="11.0" height="7.2" transform="rotate(-38 1200.0 651.6)"/><rect x="1216.9" y="684.5" width="6.1" height="4.0" transform="rotate(-38 1219.9 686.5)"/><rect x="1200.6" y="687.8" width="3.7" height="2.4" transform="rotate(-38 1202.5 689.0)"/><rect x="1205.1" y="640.7" width="3.0" height="2.0" transform="rotate(45 1206.6 641.7)"/><rect x="1210.1" y="645.6" width="3.0" height="2.0" transform="rotate(45 1211.6 646.6)"/><rect x="1219.8" y="643.4" width="1.9" height="1.6" transform="rotate(45 1220.8 644.2)"/><rect x="1223.1" y="646.7" width="1.9" height="1.6" transform="rotate(45 1224.1 647.5)"/><rect x="1226.5" y="650.0" width="1.9" height="1.6" transform="rotate(45 1227.4 650.8)"/></g>
<g clip-path="url(#cT13)"><rect x="1213.1" y="901.1" width="3.0" height="2.0" transform="rotate(-38 1214.6 902.1)"/></g>
<g clip-path="url(#cT15)"><rect x="1160.4" y="731.0" width="1.4" height="1.2" transform="rotate(-38 1161.1 731.6)"/><rect x="1164.9" y="747.7" width="1.4" height="1.2" transform="rotate(-38 1165.6 748.3)"/></g>
<rect x="1129.8" y="683.6" width="18.3" height="1.9" transform="rotate(46 1138.9 684.6)"/><rect x="1128.7" y="688.1" width="6.0" height="1.0" transform="rotate(45 1131.7 688.6)"/><rect x="1133.0" y="693.5" width="9.3" height="1.7" transform="rotate(47 1137.7 694.4)"/><rect x="1132.7" y="695.6" width="7.5" height="1.7" transform="rotate(47 1136.4 696.5)"/><rect x="1138.3" y="693.8" width="8.8" height="2.3" transform="rotate(47 1142.7 694.9)"/><rect x="1177.2" y="670.6" width="14.3" height="2.6" transform="rotate(46 1184.4 671.9)"/><rect x="1179.2" y="673.7" width="4.5" height="4.0" transform="rotate(46 1181.4 675.7)"/><rect x="1174.2" y="675.2" width="4.0" height="1.8" transform="rotate(45 1176.2 676.1)"/><rect x="1171.2" y="674.2" width="3.5" height="2.0" transform="rotate(-40 1172.9 675.2)"/><rect x="1285.5" y="589.6" width="12.0" height="2.2" transform="rotate(25 1291.5 590.7)"/><rect x="1291.0" y="596.0" width="17.0" height="2.6" transform="rotate(24 1299.5 597.3)"/><rect x="1286.8" y="592.6" width="6.0" height="3.0" transform="rotate(25 1289.8 594.1)"/><rect x="1279.6" y="594.4" width="5.0" height="2.0" transform="rotate(15 1282.1 595.4)"/><rect x="1277.3" y="598.0" width="3.5" height="1.5" transform="rotate(10 1279.1 598.8)"/><rect x="1287.9" y="599.0" width="10.0" height="2.5" transform="rotate(22 1292.9 600.3)"/><rect x="1288.5" y="600.7" width="5.0" height="2.2" transform="rotate(30 1291.0 601.8)"/><rect x="1289.9" y="593.8" width="6.0" height="2.0" transform="rotate(70 1292.9 594.8)"/><rect x="1302.0" y="585.8" width="9.5" height="4.5" transform="rotate(25 1306.8 588.0)"/><rect x="1274.2" y="586.3" width="6.5" height="2.6" transform="rotate(100 1277.4 587.6)"/><rect x="1197.3" y="948.4" width="15.6" height="5.7" transform="rotate(45 1205.1 951.2)"/><rect x="1206.8" y="960.3" width="11.0" height="2.6" transform="rotate(45 1212.3 961.6)"/><rect x="1204.8" y="947.6" width="15.6" height="2.1" transform="rotate(45 1212.6 948.6)"/><rect x="1211.6" y="943.8" width="8.8" height="2.3" transform="rotate(45 1216.0 944.9)"/><rect x="1211.3" y="941.0" width="15.6" height="2.3" transform="rotate(45 1219.1 942.1)"/><rect x="1195.7" y="959.9" width="8.8" height="2.3" transform="rotate(45 1200.1 961.0)"/><rect x="1195.7" y="965.4" width="7.8" height="2.8" transform="rotate(45 1199.6 966.8)"/><rect x="1193.2" y="949.4" width="6.0" height="2.0" transform="rotate(20 1196.2 950.4)"/><rect x="1200.5" y="961.5" width="5.0" height="2.0" transform="rotate(-30 1203.0 962.5)"/><rect x="1207.0" y="944.8" width="4.0" height="1.5" transform="rotate(-45 1209.0 945.5)"/><rect x="1161.0" y="933.2" width="13.5" height="4.8" transform="rotate(45 1167.7 935.6)"/>
</g>
<path d="M1190.0 348.5L1203.3 339.1L1218.3 330.8L1233.2 327.4L1249.0 324.4L1264.8 325.8L1280.6 327.1L1293.1 333.2L1309.7 333.2L1323.0 337.4L1339.6 340.4L1354.6 342.9L1369.5 350.7L1382.8 358.2L1394.5 369.8L1404.4 381.4L1412.7 396.4L1417.7 406.4L1421.0 419.7L1426.0 433.0L1431.9 446.3L1435.2 456.2L1436.8 467.9L1438.0 480.0L1438.8 486.6L1437.7 498.3L1434.3 514.9L1429.4 526.5L1422.7 536.5L1412.7 548.2L1401.1 559.8L1389.5 568.1L1372.8 576.4L1356.2 581.4L1339.6 584.7L1333.0 585.1L1319.7 583.1L1306.4 580.6L1293.1 575.6L1283.1 569.8L1273.1 563.9L1268.1 559.0L1264.0 554.8L1259.8 554.5L1255.7 556.1L1251.5 555.6L1250.7 561.4L1248.2 569.8L1244.9 578.1L1241.5 586.4L1236.5 596.4L1228.2 606.3L1218.3 616.3L1208.3 626.3L1198.3 634.6L1190.0 639.6L1179.2 646.2L1169.2 651.2L1159.2 653.7L1142.6 660.0L1132.6 670.0L1124.3 678.3L1117.7 691.6L1109.4 703.2L1099.4 713.2L1086.1 724.8L1069.5 733.1L1052.8 739.8L1036.2 741.8L1021.3 742.8L1006.3 739.8L989.7 734.8L976.4 726.5L963.1 717.3L953.1 706.5L943.1 694.9L936.5 681.6L931.5 668.3L929.8 660.0L928.5 647.9L927.8 636.2L929.8 624.6L933.2 613.0L936.5 603.0L941.5 593.0L946.5 583.1L953.1 574.7L959.8 568.1L964.7 558.1L969.7 548.2L976.4 539.8L983.0 533.2L989.7 524.9L1003.0 516.6L1013.0 511.6L1022.9 507.4L1032.9 504.9L1042.9 501.6L1052.8 490.0L1062.8 480.0L1074.5 471.2L1081.1 464.6L1087.8 457.9L1099.4 450.4L1114.4 441.3L1120.2 439.6L1124.3 431.3L1129.3 416.4L1136.0 406.4L1142.6 394.7L1152.6 382.3L1174.2 367.3Z" fill="#e4b536" stroke="#3c3010" stroke-width="0.9" stroke-linejoin="round"/>
<g fill="none" stroke="#1f4ef6" stroke-width="1.05" stroke-linejoin="round" stroke-linecap="round">
<path clip-path="url(#cT11)" d="M1122.7 891.9L1104.5 890.8L1093.0 890.3L1082.6 879.9L1084.7 860.1L1092.5 851.8L1086.2 845.6L1089.9 811.2L1097.2 802.4L1110.7 789.2L1129.9 791.2L1147.6 791.4L1149.7 790.9M1097.2 802.4L1105.0 811.2L1115.4 803.9L1137.2 824.7L1147.6 835.2L1166.4 851.8L1170.5 854.4L1174.2 856.5M1113.3 824.7L1115.9 822.9L1119.0 823.7L1137.2 842.4L1127.9 851.8L1119.0 843.0L1112.8 836.2L1113.3 824.7M1105.0 811.2L1101.3 816.4L1100.3 840.4L1109.7 850.2L1119.0 843.0M1137.2 824.7L1129.9 833.1M1092.5 851.8L1111.2 869.0L1127.3 885.6L1132.5 892.7M1137.2 842.4L1127.9 851.8L1119.0 860.6L1111.2 869.0M1136.7 860.1L1149.2 871.6L1140.4 880.7L1128.4 869.0L1136.7 860.1M1119.0 860.6L1128.4 869.0M1147.6 835.2L1159.6 822.1L1168.4 819.5L1170.3 821.4L1167.9 829.9L1179.9 839.8M1159.6 823.7L1167.9 830.5M1189.8 812.8L1180.4 839.8L1174.2 856.5L1171.6 864.3L1165.8 871.6L1146.6 892.7M1157.5 863.2L1165.8 871.1M1174.2 856.5L1205.9 884.1L1209.6 892.7M1167.4 892.7L1179.4 879.4L1188.2 887.2L1178.9 892.7M1101.3 861.7L1096.6 866.9L1096.1 874.2L1105.0 883.5L1104.7 890.3M1131.0 780.0L1134.1 790.4M1144.5 780.0L1148.7 791.2L1151.8 799.3M1128.9 790.9L1129.9 795.6L1140.9 805.5M1159.1 806.0L1181.5 798.5L1232.4 780.5M1174.7 780.0L1181.5 798.5L1184.1 805.0L1189.8 812.8L1198.6 815.9L1233.0 828.4L1259.0 841.9L1276.7 857.5L1280.3 862.2M1198.6 815.9L1201.2 807.1L1225.7 798.7L1229.8 809.1L1233.0 817.5L1234.5 821.6L1233.0 828.4M1212.7 820.6L1214.8 815.9L1230.4 809.7M1233.0 780.0L1243.9 810.2L1247.0 816.9L1263.1 826.8L1280.3 836.7M1239.2 795.6L1263.7 786.8M1233.5 813.8L1268.3 800.8L1262.1 780.0M1256.9 806.5L1259.0 810.2L1280.3 824.7M1276.7 857.5L1280.3 856.5"/>
<path clip-path="url(#cT12)" d="M1207.5 658.3L1221.6 640.0M1190.0 685.7L1260.6 640.0M1190.0 673.2L1199.1 679.9L1205.8 684.0L1208.3 689.9L1205.8 698.2L1198.3 704.0L1190.0 706.5M1265.6 735.6L1288.1 730.3L1315.5 745.6L1328.8 784.6L1338.4 820.0M1265.6 735.6L1269.5 748.9L1287.2 743.9L1307.2 754.7L1318.0 791.3L1328.0 820.0M1278.1 748.0L1291.4 789.6L1310.5 784.3L1328.0 784.3M1301.4 738.9L1292.2 754.7L1303.0 786.3M1296.4 798.7L1317.2 792.9M1296.4 798.7L1303.0 820.0M1307.2 795.4L1313.8 820.0M1258.2 772.1L1282.3 763.0M1190.0 742.2L1216.6 733.9L1234.9 727.3M1190.0 759.7L1221.6 748.9L1245.7 740.2M1190.0 778.0L1228.2 764.7L1252.3 757.2M1190.0 790.4L1234.0 780.5L1258.2 772.1M1239.9 795.4L1263.1 787.1M1246.5 811.2L1269.0 800.4M1216.6 733.9L1221.6 748.9L1228.2 764.7L1234.0 780.5L1239.9 795.4L1244.9 812.9L1247.3 820.0M1252.3 757.2L1258.2 772.1L1263.1 787.1L1269.0 800.4M1190.0 806.2L1200.0 806.2L1225.7 798.7L1231.6 809.5L1234.9 820.0M1198.3 820.0L1202.5 806.2M1211.6 820.0L1214.9 815.4L1229.9 810.4M1257.3 807.1L1260.6 812.9L1271.4 820.0"/>
<path clip-path="url(#cT13)" d="M1193.8 873.0L1206.3 883.8L1212.9 902.1L1215.4 910.4L1214.6 917.9M1139.8 897.9L1154.7 910.4L1179.7 936.2L1191.3 961.1L1201.3 983.5L1202.1 993.5L1201.3 1011.0L1189.7 1017.3L1181.3 1032.6L1173.0 1053.0M1189.7 1017.3L1197.1 1028.4L1196.3 1053.0M1082.4 873.0L1083.3 879.6L1094.1 890.5L1123.2 891.3L1124.0 895.4L1095.7 927.5L1103.6 937.0L1109.9 943.6L1119.0 959.4L1123.2 961.1L1133.1 956.1M1133.1 956.1L1137.3 969.1L1110.7 1012.6L1111.9 1020.1L1121.5 1040.1L1136.5 1053.0M1103.6 937.0L1113.2 927.0L1139.8 897.9L1154.7 883.0L1166.4 873.0M1118.2 927.9L1124.0 943.6L1133.1 939.5L1150.6 927.0L1139.8 918.7L1133.1 920.4L1118.2 927.9M1124.0 943.6L1133.1 956.1L1143.1 951.1L1149.8 969.4L1148.9 972.7M1143.1 951.1L1156.4 935.3M1150.6 927.0L1156.4 935.3L1166.4 942.8L1149.8 960.3M1166.4 895.9L1188.0 888.5L1179.7 879.6L1167.7 892.1M1153.1 908.7L1166.4 895.9M1154.7 883.0L1166.4 895.9M1104.9 890.5L1104.5 883.0M1136.5 969.1L1146.4 976.1L1166.4 989.4L1174.7 996.8L1189.7 1017.3M1146.4 976.1L1135.6 996.8L1123.2 996.0L1132.3 1001.8M1135.6 996.8L1155.6 1006.0L1163.1 989.4M1150.6 981.0L1144.8 1001.0M1155.6 982.7L1149.8 1003.5M1174.7 996.8L1159.7 1030.9L1153.1 1053.0M1166.4 989.4L1150.6 1022.6L1143.1 1039.2M1129.0 1006.0L1123.2 1016.0L1131.5 1032.6L1143.1 1029.2L1149.8 1016.0L1138.1 1009.3L1129.0 1006.0M1110.7 1019.3L1103.2 1024.3L1086.6 1053.0M1121.5 1040.1L1143.1 1029.2M1121.5 1040.1L1118.2 1045.9L1113.2 1053.0M1131.5 1032.6L1138.1 1044.2L1153.1 1053.0M1182.2 1007.6L1159.7 1053.0M1179.7 963.6L1188.8 961.1L1201.3 983.5M1179.7 963.6L1193.0 991.8L1201.3 993.5M1203.8 1016.0L1257.8 990.2L1266.1 1004.3L1262.0 1016.8L1258.6 1016.0L1251.2 996.8M1237.0 999.3L1249.5 1025.9L1247.8 1032.6L1214.6 1049.2L1207.9 1053.0M1208.8 1025.9L1240.4 1012.6M1211.3 1036.7L1244.5 1022.6M1201.3 1011.0L1207.9 1025.9L1206.3 1037.6L1207.1 1053.0M1196.3 1037.6L1206.3 1037.6"/>
<path clip-path="url(#cT15)" d="M1149.0 720.0L1147.3 725.0L1151.5 735.0L1164.8 751.6L1173.1 774.9L1180.6 794.8L1186.4 808.1M1104.1 778.5L1139.0 767.4M1139.0 759.9L1164.8 751.6L1234.6 727.5M1144.0 776.5L1170.6 768.2L1245.4 740.3M1149.8 791.5L1175.6 783.2L1227.9 764.9L1252.9 756.9M1139.0 759.9L1144.0 776.5L1149.8 791.5L1151.5 799.0M1127.4 771.5L1134.0 789.8M1320.2 764.9L1326.0 785.7L1338.5 817.2L1331.8 844.7L1315.2 853.8M1296.1 799.8L1316.0 793.1L1326.0 814.7L1322.7 830.5L1309.4 840.5L1296.1 799.8M1307.7 797.3L1321.0 830.5M1276.1 857.1L1292.8 850.5L1309.4 840.5M1278.6 823.9L1282.5 826.4L1287.3 838.0L1292.1 850.5M1278.6 838.8L1281.8 840.2L1287.3 838.0M1259.5 843.0L1277.0 858.0L1316.0 900.0"/>
<path d="M389.0 401.6L495.4 436.8L621.7 504.0L684.9 575.4L738.1 613.7L744.7 620.3L754.7 640.3L759.7 663.5L757.4 686.8L754.7 700.1M744.1 620.3L851.1 609.7L870.1 603.7M762.3 465.7L792.9 472.4L801.2 479.0L807.2 481.3M812.9 419.2L810.5 424.2L813.9 429.8M754.7 700.0L750.7 716.6L749.7 736.6L754.7 763.2L764.7 786.4L778.0 806.4L801.2 833.0L846.1 880.5L872.7 907.8L884.3 926.1L894.3 944.3L907.6 962.6L920.9 979.3L937.5 997.5L942.5 1002.5L946.8 1004.2M884.0 840.0L872.7 854.6L859.4 867.2L846.1 880.5L817.9 909.4L801.2 924.4L792.9 929.4M859.4 867.9L897.6 886.2L917.6 894.5L934.2 901.1L954.2 911.8M934.2 901.1L937.5 892.8L941.5 886.8L947.5 880.5M941.5 886.8L961.5 897.8M999.7 840.0L980.8 866.2L964.1 892.8L954.2 911.8L920.9 979.3M1029.0 838.0L1004.0 876.2L980.8 916.1L965.8 946.0L955.8 972.6L946.8 1004.2L937.5 1032.4L931.6 1052.4M1451.2 246.7L1555.9 227.4L1589.2 227.4L1605.8 224.7L1647.4 209.1L1660.7 206.8L1665.7 210.1L1683.9 231.4L1712.2 242.3L1720.5 254.0L1732.1 267.3L1747.1 287.2L1763.7 303.8L1780.3 347.1L1778.7 387.0L1777.0 420.2L1778.0 450.1L1773.7 466.7L1769.7 481.0M1589.2 227.4L1589.2 237.4L1582.5 254.0L1580.2 267.3L1584.2 280.6L1589.2 288.9L1594.2 292.2M1472.2 279.9L1477.8 279.9L1486.1 285.6L1491.1 292.2L1504.4 297.2L1517.7 307.2L1524.4 317.1L1527.7 324.5L1546.0 340.4L1539.3 363.7L1534.3 396.9L1530.3 423.5L1491.1 430.8L1481.1 438.5L1477.2 446.8L1474.5 481.0M1876.1 389.6L1880.1 388.0L1900.0 398.6L1916.6 413.6L1920.0 423.5L1915.0 450.1L1911.7 470.1L1913.3 481.0M1876.1 389.6L1878.4 393.6L1886.7 394.6L1888.4 391.9L1880.1 388.0M1510.1 579.6L1577.6 572.3L1604.1 572.0L1634.1 576.3L1655.7 582.3L1733.8 606.2L1921.6 672.7M1481.1 440.0L1477.2 450.0L1474.5 479.9M1510.1 559.3L1560.9 552.4L1570.9 556.4L1577.6 564.7L1580.9 572.3M1778.7 450.0L1763.7 503.2L1753.8 539.7L1747.1 553.0L1735.5 594.6L1733.8 596.9L1717.2 595.6L1700.6 592.9L1683.9 586.3L1660.7 576.3L1655.7 582.3M1916.6 440.0L1911.7 463.3L1912.7 476.6L1921.6 494.9M1921.6 659.4L1916.0 670.4M1291.0 873.5L1321.6 906.1L1326.6 908.8L1376.4 917.8M1593.5 815.4L1564.3 854.6L1557.6 858.9L1551.6 857.9L1551.0 849.6L1554.3 842.0M1706.5 961.6L1702.2 965.0L1692.2 967.0L1687.3 970.9L1647.4 1034.1L1645.7 1039.1L1647.4 1044.1L1656.7 1052.4M1426.6 283.6L1397.7 318.8L1438.8 356.2L1452.1 340.5M1426.6 283.6L1465.4 314.4M1456.2 299.4L1440.4 318.0L1422.1 341.8L1389.7 380.0M1442.6 318.0L1448.7 322.2L1453.7 318.8L1452.1 313.0L1447.1 311.0M1443.8 350.4L1461.2 362.1L1506.1 357.1L1511.9 358.7L1516.9 364.6L1515.2 371.2L1509.4 380.0M1356.5 380.0L1380.6 351.6L1413.8 380.0M1443.8 359.9L1426.3 380.0M1452.1 356.2L1461.2 344.6L1473.7 330.5L1477.0 330.2L1497.8 347.9M1461.2 344.6L1466.2 348.8L1487.8 346.3L1492.0 343.3M1461.2 362.1L1461.2 368.7M1481.2 360.4L1483.7 380.0M1515.2 370.4L1509.4 369.5L1482.8 373.7L1476.2 378.7L1477.0 380.0M1092.4 403.1L1100.2 425.5L1116.0 420.5M1104.4 399.7L1140.1 389.4L1142.6 403.1L1113.0 411.7L1104.4 399.7M1113.0 411.7L1124.0 432.1L1133.5 449.6L1155.9 472.0L1167.5 480.0M1124.3 432.1L1148.4 425.0M1142.6 403.1L1149.3 426.3L1151.7 433.0L1133.5 449.6L1118.5 455.9M1150.9 382.3L1173.4 452.1L1180.8 462.1L1190.0 472.9M1169.2 383.9L1178.3 419.7L1182.5 426.3L1190.0 430.5M1167.5 433.8L1185.8 428.8L1190.0 428.0M1190.0 430.5L1173.4 452.1L1158.4 469.5L1146.8 480.0M1190.0 454.6L1180.0 462.1M1030.9 430.5L1061.7 401.7M1052.5 475.4L1083.6 444.6L1088.1 442.1L1089.7 444.6L1090.2 469.5L1081.1 480.0M979.7 406.4L981.7 401.4M998.0 480.0L1003.0 476.2L1007.1 480.0M1187.5 365.7L1190.0 374.8M1209.1 358.5L1256.5 344.0L1263.1 364.0L1214.9 379.8L1209.1 358.5M1214.9 379.8L1213.3 396.4L1210.8 399.7L1198.3 403.9M1263.1 364.0L1267.3 370.6L1265.6 378.1L1259.8 391.4M1232.4 375.6L1234.9 381.4L1273.1 397.2L1278.1 395.6L1290.6 385.6L1263.1 319.1M1190.0 374.0L1198.3 403.9L1193.3 419.7L1190.0 431.3M1210.8 399.7L1224.9 406.4L1233.2 410.5L1239.9 416.4L1246.5 426.3L1249.0 434.6L1258.2 447.1M1233.2 410.5L1198.3 438.8L1190.0 446.3M1190.0 428.8L1199.1 439.6L1221.6 464.6L1229.1 476.2M1209.9 480.0L1234.9 451.6L1249.0 434.6L1258.2 428.0L1268.1 423.8L1283.1 422.7L1291.4 424.7L1306.4 433.0L1311.3 437.1L1331.3 453.8L1349.6 467.9L1369.5 480.0M1311.3 437.1L1348.7 391.4L1356.6 380.0M1348.7 391.4L1368.7 406.4L1392.0 424.7L1397.8 424.3L1406.1 418.8L1417.7 402.2L1412.7 396.4L1426.4 380.0M1389.6 380.0L1368.7 406.4L1340.4 442.1L1331.3 453.8L1298.0 480.0M1340.4 442.1L1349.6 432.1L1355.4 438.0L1347.1 447.6L1340.4 442.1M1280.6 466.2L1296.4 443.8M1280.6 466.2L1289.7 473.7L1299.7 475.4M1234.9 451.6L1256.5 472.9L1263.1 480.0M1263.1 408.0L1270.6 419.3M1279.8 412.2L1285.6 416.4L1288.1 423.0M1296.4 433.0L1298.9 428.8M1190.0 455.4L1199.1 466.2M1221.6 472.9L1227.4 478.7L1234.0 472.0M1343.8 358.5L1331.3 341.6L1318.0 317.5L1289.7 334.1L1282.3 339.9L1280.6 348.2L1281.1 358.2M1326.3 347.9L1334.3 342.4M1288.1 341.6L1296.4 369.0M1293.1 341.6L1303.0 368.2M1285.6 357.3L1296.4 355.7L1299.7 349.9L1298.0 343.2L1293.1 340.7L1287.2 341.6M1351.2 469.5L1344.6 480.0M1483.9 380.0L1484.2 381.4L1489.2 385.6L1505.0 383.9L1498.3 393.1M935.3 531.9L998.0 480.0M935.3 531.9L962.3 566.4L978.0 586.4L997.2 610.5M950.6 549.5L1014.6 496.6M968.1 504.9L996.3 542.3L1025.4 578.1L1054.5 613.0L1071.1 632.9L1084.4 647.1L1094.4 660.0M1006.3 480.0L1022.1 507.4L1028.7 519.9L1047.9 553.1L1053.7 557.8M962.3 566.4L994.7 541.5L1025.4 517.4L1028.7 519.6M978.0 586.4L1011.3 559.8L1036.2 538.5L1041.2 538.2M1036.2 538.5L1039.5 540.7M870.0 603.8L911.6 588.9L921.5 588.4L939.8 592.2L959.8 598.4L964.7 598.4L978.0 586.4M997.2 610.5L1003.0 604.7L1011.3 589.7L1020.4 579.7L1025.4 578.1L1036.2 573.9L1046.2 568.1L1052.8 561.4L1053.7 557.3L1059.5 548.2L1064.5 543.2L1083.6 528.2L1095.2 519.9L1106.9 509.9L1129.3 496.6L1146.8 480.0M997.2 610.5L976.4 621.3L966.4 629.6L964.4 633.8L976.4 647.1L986.4 660.0M976.4 647.1L1037.9 594.7M999.7 660.0L1054.5 613.0L1079.4 590.5L1102.7 571.4L1138.5 541.5L1167.5 518.2L1190.0 499.9M1055.3 580.6L1095.2 546.5M1083.6 528.2L1094.4 541.8L1111.9 562.6M1095.2 519.9L1104.7 529.9L1104.7 533.5L1094.4 541.8M1100.2 547.3L1104.7 542.8M1073.6 553.1L1083.6 544.8L1087.8 544.0L1089.4 546.5L1087.8 549.0L1077.8 555.6L1074.8 555.6L1073.6 553.1M1082.4 538.2L1086.1 539.0L1088.6 543.2L1089.4 546.5M1094.4 498.3L1111.9 513.2L1138.5 541.5L1171.7 573.9L1180.8 583.1L1190.0 590.5M1128.5 496.6L1139.3 508.3L1156.7 525.7M1149.3 480.0L1176.7 509.1M1169.2 480.0L1190.0 498.3M1144.3 532.4L1149.3 528.5L1150.9 530.7L1145.1 535.7M1106.0 554.0L1130.1 534.0M1167.5 518.2L1190.0 539.0M1145.1 535.7L1175.0 564.8M1190.0 538.2L1184.2 546.5L1175.9 563.1L1171.7 573.9M1102.7 571.4L1116.0 587.2L1126.8 601.3L1135.1 609.7L1146.8 623.8L1177.5 658.7M1079.4 590.5L1093.6 611.3L1098.6 618.8L1104.4 624.6L1118.5 636.2M1116.0 587.2L1093.6 611.3L1074.5 634.6L1057.8 646.2L1037.9 660.0M1126.8 601.3L1104.4 624.6L1083.6 647.1L1072.0 660.0M1171.7 573.9L1135.1 609.7L1118.5 636.2L1096.9 660.0M1042.0 623.8L1057.8 644.6L1072.0 660.0M1070.3 490.3L1081.1 481.7M1190.0 496.6L1200.8 486.6L1206.6 480.0M1195.0 480.0L1200.8 486.6M1210.8 480.0L1220.8 488.3M1193.3 494.1L1211.6 517.4L1223.2 529.5M1190.0 537.3L1211.6 518.2L1244.9 490.0L1254.8 480.0M1267.3 480.0L1294.7 507.4L1310.5 522.9L1321.3 532.4L1334.6 543.2L1342.9 545.7L1372.8 550.6L1396.1 555.6L1409.4 560.6M1284.7 496.6L1297.2 480.0L1324.6 504.1M1343.8 480.0L1324.6 504.1L1310.5 522.9L1273.1 573.9L1246.5 608.8L1207.5 657.9M1294.7 507.4L1275.6 533.2L1261.5 554.0L1244.9 577.2L1214.9 616.3L1190.0 646.2M1257.3 520.7L1274.8 533.5M1257.3 520.7L1228.2 559.0M1265.6 528.2L1236.5 566.4M1228.2 537.8L1247.3 554.0L1256.5 558.5M1224.1 558.1L1243.2 578.4L1256.5 593.9M1190.0 592.2L1214.9 616.3L1229.1 629.6M1321.3 532.4L1328.8 524.0M1330.5 539.0L1339.3 528.5M1372.8 550.6L1372.8 529.9L1377.8 514.1L1381.2 508.3L1384.1 506.6L1396.1 519.9L1407.8 533.2L1417.7 544.8M1389.5 553.1L1387.0 539.8L1388.6 528.2L1396.1 519.9M1401.9 539.0L1404.4 534.9L1407.8 532.9M1370.4 480.0L1382.8 487.5L1397.8 500.8L1426.0 533.2L1442.7 549.0L1456.0 556.5L1472.6 561.4L1482.6 562.3L1510.0 559.8M1475.1 480.0L1459.3 533.2L1454.3 538.2L1444.3 546.5L1442.7 549.0M1424.7 540.2L1405.3 558.1M1342.9 545.7L1332.1 581.4M1360.4 549.0L1352.1 589.7M1334.6 575.6L1353.7 580.6L1372.8 573.9L1389.5 564.8L1396.1 555.6M1228.2 660.0L1269.8 634.6L1381.2 596.4L1510.0 579.7M1273.1 574.7L1283.1 581.7L1277.3 594.7L1276.4 602.2L1285.6 602.2L1298.9 604.7L1300.5 599.7L1298.0 596.4L1289.7 597.2M1283.1 581.7L1293.1 584.7L1296.4 588.9M1254.8 598.0L1263.1 600.5L1271.4 602.7L1276.4 602.2M1246.5 608.8L1256.5 615.5L1256.5 618.0L1252.3 624.6L1247.3 632.9M998.0 660.0L989.7 666.6L986.4 670.0L978.0 686.6L961.4 717.3L946.5 743.1L921.5 791.3L884.1 840.0M942.3 666.3L976.4 689.9L1015.4 711.9M986.4 660.0L992.2 664.7M1001.3 660.0L1011.3 668.3L1034.6 685.8L1058.7 702.9M1011.3 668.3L1005.5 674.1L1003.8 679.1L1006.3 683.3L1026.2 697.9L1034.6 685.8L1065.3 660.0M1019.6 673.3L1037.9 660.0M1048.7 695.7L1053.7 690.4M1071.1 660.0L1098.6 691.6M1094.4 660.0L1112.7 681.6L1122.7 693.2L1136.8 709.0M961.4 717.3L980.5 730.6L999.7 744.8L1009.6 751.8M979.7 731.5L969.7 753.9L964.7 760.6M968.9 755.6L976.4 758.9L992.2 739.8M999.7 745.6L982.2 768.0L986.4 773.0L990.5 771.0L1003.0 754.7L998.0 749.8M1179.2 660.0L1190.0 672.5M1179.2 660.0L1146.8 700.7L1146.8 704.0L1136.8 709.0L1119.3 722.3L1084.4 746.4L1064.5 765.6L1044.5 786.3L1019.6 815.4L999.7 840.0M1190.0 685.8L1170.4 700.1L1134.0 723.3L1103.9 743.6L1088.3 755.1L1077.9 766.5L1067.5 779.0L1056.2 796.6L1046.9 811.9L1027.9 840.0M1182.5 691.6L1190.0 703.2M1190.0 707.4L1169.2 713.2L1152.6 717.3L1149.3 720.7M1190.0 646.2L1179.2 660.0"/>
</g>
</svg>
<div class="a" style="left:7px;top:1057px;width:245.5px;height:20.5px;border:1px solid #bdbdbd;border-radius:3px;background:#fff;"></div>
<svg style="left:14px;top:1060px" width="16" height="16" viewBox="0 0 16 16"><circle cx="6.800" cy="6.800" r="4.300" fill="none" stroke="#8e8e8e" stroke-width="1.300"/><path d="M10 10l3.600 3.600" stroke="#8e8e8e" stroke-width="1.500" stroke-linecap="round"/></svg>
<span class="t" style="left:36.70px;top:1061.93px;font-size:13px;line-height:14.937px;letter-spacing:0.300px;color:#7d7d7d;">Type to locate (Ctrl+K)</span>
<span class="t" style="left:263.60px;top:1063.13px;font-size:9.8px;line-height:11.260px;letter-spacing:0.188px;color:#222;">1 legend entries removed.</span>
<span class="t" style="left:1092.40px;top:1063.13px;font-size:9.8px;line-height:11.260px;letter-spacing:0.076px;color:#222;">Coordinate</span>
<div class="a" style="left:1145px;top:1057px;width:111px;height:20px;border:1px solid #bdbdbd;border-radius:3px;background:#fff;"></div>
<span class="t" style="left:1158.50px;top:1062.20px;font-size:10.5px;line-height:12.065px;letter-spacing:-0.198px;color:#222;">2275725,-4029383</span>
<svg style="left:1261px;top:1060px" width="16" height="16" viewBox="0 0 16 16"><path d="M3 2.500c3-1.500 6 .500 7.500 4s1 6.500-1 7.500-5-1-6.500-4.500-1.500-5.500 0-7z" fill="#f4f4f4" stroke="#333" stroke-width="1.100"/><path d="M4 3l5.500 10M3 6.500l6-2.500M9 8.500a1.600 1.600 0 1 1-.1 0z" stroke="#333" stroke-width=".9" fill="none"/><path d="M11 3.500l2.500-2M12 6l2.500-.5" stroke="#944" stroke-width=".8"/></svg>
<span class="t" style="left:1291.20px;top:1063.13px;font-size:9.8px;line-height:11.260px;letter-spacing:-0.102px;color:#222;">Scale</span>
<div class="a" style="left:1319.5px;top:1057px;width:93px;height:20px;border:1px solid #bdbdbd;border-radius:3px;background:#fff;"></div>
<div class="a" style="left:1394px;top:1058px;width:1px;height:20px;background:#c8c8c8"></div>
<svg style="left:1400.5px;top:1067px" width="7" height="4" viewBox="0 0 7 4"><path d="M0 0h7L3.5 4z" fill="#555"/></svg>
<span class="t" style="left:1323.70px;top:1062.50px;font-size:10.5px;line-height:12.065px;letter-spacing:-0.236px;color:#222;">1:22848</span>
<svg style="left:1426px;top:1060px" width="14" height="16" viewBox="0 0 14 16"><path d="M3.500 7v-2.500a3.500 3.500 0 0 1 7 0v2.500" fill="none" stroke="#9a9a9a" stroke-width="1.600"/><rect x="1" y="7" width="12" height="8.500" rx="1.200" fill="#6e6e6e"/></svg>
<span class="t" style="left:1448.70px;top:1063.13px;font-size:9.8px;line-height:11.260px;letter-spacing:0.244px;color:#222;">Magnifier</span>
<div class="a" style="left:1495px;top:1057px;width:91.5px;height:20px;border:1px solid #bdbdbd;border-radius:3px;background:#fff;"></div>
<div class="a" style="left:1574px;top:1058px;width:1px;height:20px;background:#c8c8c8"></div>
<svg style="left:1577.500px;top:1061px" width="8" height="14" viewBox="0 0 8 14"><path d="M.5 5l3.500-4 3.500 4zM.5 9l3.500 4 3.500-4z" fill="#555"/></svg>
<span class="t" style="left:1499.30px;top:1062.50px;font-size:10.5px;line-height:12.065px;letter-spacing:-0.588px;color:#222;">100%</span>
<span class="t" style="left:1598.70px;top:1063.13px;font-size:9.8px;line-height:11.260px;letter-spacing:0.013px;color:#222;">Rotation</span>
<div class="a" style="left:1645.3px;top:1057px;width:88px;height:20px;border:1px solid #bdbdbd;border-radius:3px;background:#fff;"></div>
<div class="a" style="left:1721px;top:1058px;width:1px;height:20px;background:#c8c8c8"></div>
<svg style="left:1724.500px;top:1061px" width="8" height="14" viewBox="0 0 8 14"><path d="M.5 5l3.500-4 3.500 4zM.5 9l3.500 4 3.500-4z" fill="#555"/></svg>
<span class="t" style="left:1650.00px;top:1062.50px;font-size:10.5px;line-height:12.065px;letter-spacing:-0.142px;color:#222;">0.0 °</span>
<div class="a" style="left:1742.500px;top:1062.500px;width:12px;height:12px;border:1px solid #b9b9b9;border-radius:1.500px;background:#fff"></div>
<svg style="left:1742.500px;top:1062.500px" width="14" height="14" viewBox="0 0 14 14"><path d="M3.200 7.200l2.600 3 4.600-7" stroke="#000" stroke-width="1.700" fill="none"/></svg>
<span class="t" style="left:1761.60px;top:1063.13px;font-size:9.8px;line-height:11.260px;letter-spacing:-0.123px;color:#222;">Render</span>
<svg style="left:1811px;top:1060px" width="16" height="16" viewBox="0 0 16 16"><ellipse cx="8" cy="8.500" rx="7" ry="6.500" fill="none" stroke="#777" stroke-width="1"/><ellipse cx="8" cy="8.500" rx="3" ry="6.500" fill="none" stroke="#777" stroke-width=".8"/><path d="M1 8.500h14M2 5h12M2 12h12M8 2v13" stroke="#777" stroke-width=".8"/></svg>
<span class="t" style="left:1831.60px;top:1063.13px;font-size:9.8px;line-height:11.260px;letter-spacing:-0.351px;color:#222;">EPSG:3857</span>
<svg style="left:1900px;top:1060px" width="17" height="16" viewBox="0 0 17 16"><path d="M8.500 1c4.400 0 8 2.600 8 5.800s-3.600 5.800-8 5.800c-.8 0-1.500-.1-2.200-.2l-3.300 2.600.6-3.600c-1.900-1.100-3.100-2.700-3.100-4.600 0-3.200 3.600-5.800 8-5.800z" fill="#5e5e5e"/><circle cx="4.800" cy="6.800" r="1.200" fill="#fff"/><circle cx="8.500" cy="6.800" r="1.200" fill="#fff"/><circle cx="12.200" cy="6.800" r="1.200" fill="#fff"/></svg>
</body></html>
